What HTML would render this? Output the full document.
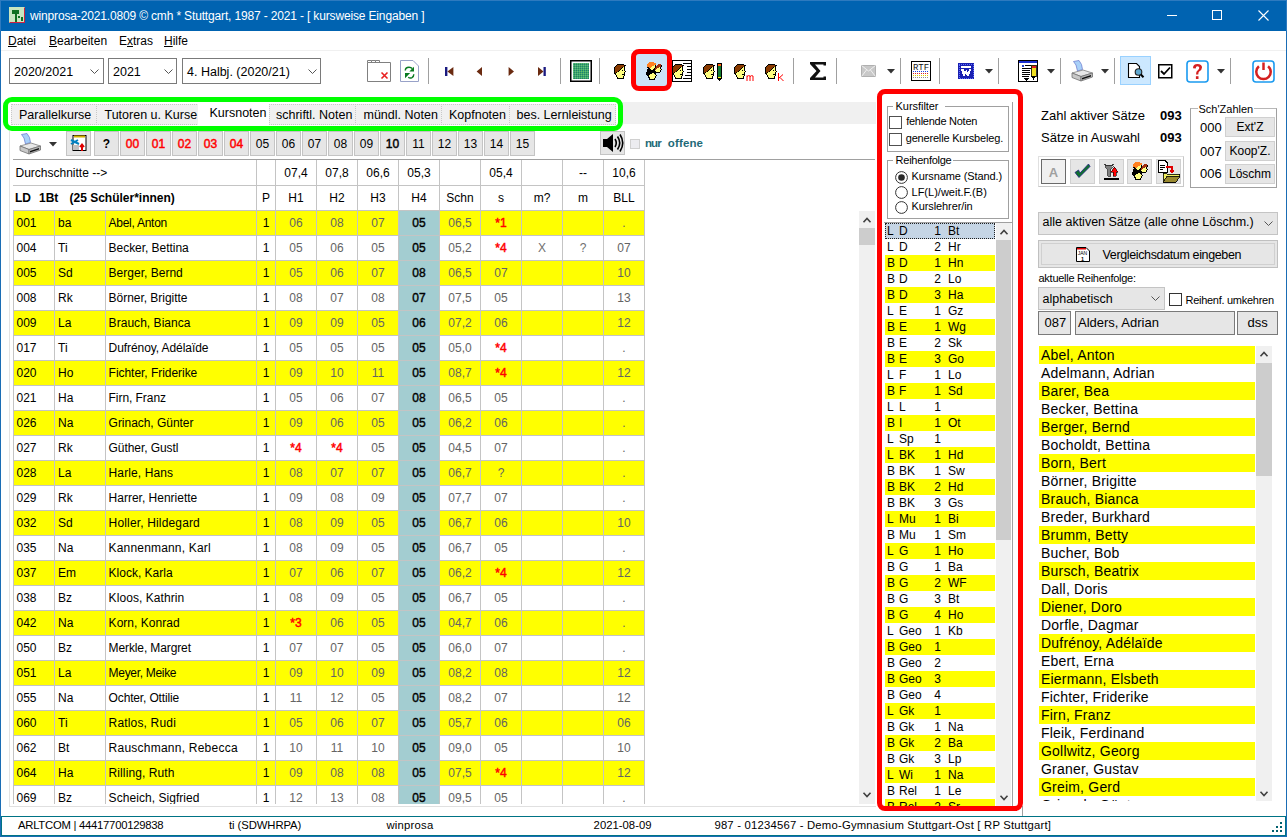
<!DOCTYPE html><html><head><meta charset="utf-8"><title>winprosa</title><style>
*{box-sizing:border-box;margin:0;padding:0}
html,body{width:1287px;height:837px;overflow:hidden;background:#fff;font-family:"Liberation Sans",sans-serif;color:#000}
.a{position:absolute}
.t{position:absolute;white-space:nowrap;line-height:1}
svg{position:absolute;overflow:visible}
</style></head><body>
<div class="a" style="left:0px;top:0px;width:1287px;height:31px;background:#0063b1"></div>
<div class="a" style="left:0px;top:0px;width:1287px;height:1px;background:#2d7abf"></div>
<div class="a" style="left:0px;top:0px;width:1px;height:31px;background:#2d7abf"></div>
<div class="a" style="left:1286px;top:0px;width:1px;height:31px;background:#2d7abf"></div>
<div class="a" style="left:9px;top:7px;width:16px;height:16px;background:#c8e6c0;border:1px solid #d02040;border-top-color:#c8e6c0;border-left-color:#c8e6c0"></div>
<svg style="left:9px;top:7px" width="16" height="16"><rect x="3" y="3" width="7" height="4" fill="#107020"/><rect x="6" y="6" width="2" height="9" fill="#107020"/><rect x="9" y="9" width="2" height="2" fill="#107020"/><rect x="12" y="10" width="2" height="4" fill="#107020"/></svg>
<div class="t" style="left:30px;top:9.84px;font-size:12px;color:#fff;letter-spacing:-0.154px">winprosa-2021.0809 © cmh * Stuttgart, 1987 - 2021 - [ kursweise Eingaben ]</div>
<div class="a" style="left:1167px;top:15px;width:10px;height:1px;background:#fff"></div>
<div class="a" style="left:1212px;top:10px;width:10px;height:10px;border:1px solid #fff"></div>
<svg style="left:1258px;top:10px" width="11" height="11"><path d="M0.5 0.5L10.5 10.5M10.5 0.5L0.5 10.5" stroke="#fff" stroke-width="1.1"/></svg>
<div class="a" style="left:0px;top:31px;width:1px;height:806px;background:#1a6db5"></div>
<div class="a" style="left:1286px;top:31px;width:1px;height:806px;background:#1a6db5"></div>
<div class="a" style="left:0px;top:836px;width:1287px;height:1px;background:#1a6db5"></div>
<div class="t" style="left:8px;top:34.84px;font-size:12px;"><u>D</u>atei</div>
<div class="t" style="left:49px;top:34.84px;font-size:12px;"><u>B</u>earbeiten</div>
<div class="t" style="left:119px;top:34.84px;font-size:12px;">E<u>x</u>tras</div>
<div class="t" style="left:164px;top:34.84px;font-size:12px;"><u>H</u>ilfe</div>
<div class="a" style="left:1px;top:50px;width:1285px;height:1px;background:#f0f0f0"></div>
<div class="a" style="left:9px;top:58px;width:95px;height:26px;border:1px solid #7a7a7a;background:#fff"></div>
<div class="t" style="left:14px;top:65.92px;font-size:12.5px;">2020/2021</div>
<svg style="left:90px;top:69px" width="9" height="5"><path d="M0.5 0.5L4.5 4.5L8.5 0.5" fill="none" stroke="#555" stroke-width="1"/></svg>
<div class="a" style="left:108px;top:58px;width:69px;height:26px;border:1px solid #7a7a7a;background:#fff"></div>
<div class="t" style="left:113px;top:65.92px;font-size:12.5px;">2021</div>
<svg style="left:164px;top:69px" width="9" height="5"><path d="M0.5 0.5L4.5 4.5L8.5 0.5" fill="none" stroke="#555" stroke-width="1"/></svg>
<div class="a" style="left:182px;top:58px;width:139px;height:26px;border:1px solid #7a7a7a;background:#fff"></div>
<div class="t" style="left:187px;top:65.92px;font-size:12.5px;">4. Halbj. (2020/21)</div>
<svg style="left:308px;top:69px" width="9" height="5"><path d="M0.5 0.5L4.5 4.5L8.5 0.5" fill="none" stroke="#555" stroke-width="1"/></svg>
<svg style="left:367px;top:59px" width="25" height="24"><path d="M0.5 3.5H23.5V22.5H0.5Z" fill="#fff" stroke="#808080"/><path d="M0.5 3.5V1.5H4.5V3.5M4.5 1.5H8.5V3.5M8.5 1.5H12.5V3.5" fill="none" stroke="#808080"/><path d="M14.5 13.5L20.5 19.5M20.5 13.5L14.5 19.5" stroke="#e82020" stroke-width="1.6"/></svg>
<svg style="left:400px;top:60px" width="20" height="23"><path d="M0.5 0.5H13L18.5 6V21.5H0.5Z" fill="#fff" stroke="#98a2c8"/><path d="M5.3 10.5Q5.3 7.2 9 7.2Q11 7.2 12.3 8.6" fill="none" stroke="#087a20" stroke-width="1.4"/><path d="M14 6.8V11.6H9.3Z" fill="#087a20"/><path d="M8.2 17.3Q10 18.6 12 17.6Q13.8 16.6 13.8 14.3" fill="none" stroke="#087a20" stroke-width="1.4"/><path d="M5 13H10.2L5 18.2Z" fill="#087a20"/></svg>
<div class="a" style="left:428px;top:58px;width:1px;height:26px;background:#a0a0a0"></div>
<svg style="left:445px;top:67px" width="110" height="10"><rect x="0" y="0" width="2.4" height="9" fill="#1a1a80"/><path d="M8.4 0V9L2.4 4.5Z" fill="#6a2a10"/><path d="M37 0V9L31.6 4.5Z" fill="#6a2a10"/><path d="M63.6 0V9L69 4.5Z" fill="#6a2a10"/><path d="M93 0V9L98.5 4.5Z" fill="#6a2a10"/><rect x="98.5" y="0" width="2.3" height="9" fill="#1a1a80"/></svg>
<div class="a" style="left:560px;top:58px;width:1px;height:26px;background:#a0a0a0"></div>
<svg style="left:570px;top:60px" width="22" height="22"><defs><pattern id="gm" width="2" height="2" patternUnits="userSpaceOnUse"><rect width="2" height="2" fill="#58b048"/><rect width="1" height="1" fill="#0a7a8a"/><rect x="1" y="1" width="1" height="1" fill="#40b8d8" opacity="0.6"/></pattern></defs><rect x="0.75" y="0.75" width="20.5" height="20.5" fill="#fff" stroke="#000" stroke-width="1.5"/><rect x="3" y="3" width="16" height="16" fill="url(#gm)"/></svg>
<div class="a" style="left:599px;top:58px;width:1px;height:26px;background:#a0a0a0"></div>
<svg style="left:614px;top:64px" width="12" height="15" shape-rendering="crispEdges"><rect x="3" y="0" width="7" height="1" fill="#000"/><rect x="2" y="1" width="1" height="1" fill="#000"/><rect x="3" y="1" width="7" height="1" fill="#8a3a00"/><rect x="10" y="1" width="2" height="1" fill="#000"/><rect x="1" y="2" width="1" height="1" fill="#000"/><rect x="2" y="2" width="8" height="1" fill="#8a3a00"/><rect x="10" y="2" width="1" height="1" fill="#000"/><rect x="0" y="3" width="1" height="1" fill="#000"/><rect x="1" y="3" width="7" height="1" fill="#8a3a00"/><rect x="8" y="3" width="1" height="1" fill="#000"/><rect x="9" y="3" width="1" height="1" fill="#ffff80"/><rect x="10" y="3" width="1" height="1" fill="#000"/><rect x="0" y="4" width="1" height="1" fill="#000"/><rect x="1" y="4" width="6" height="1" fill="#8a3a00"/><rect x="7" y="4" width="1" height="1" fill="#000"/><rect x="8" y="4" width="2" height="1" fill="#ffff80"/><rect x="10" y="4" width="1" height="1" fill="#000"/><rect x="0" y="5" width="1" height="1" fill="#000"/><rect x="1" y="5" width="5" height="1" fill="#8a3a00"/><rect x="6" y="5" width="1" height="1" fill="#000"/><rect x="7" y="5" width="3" height="1" fill="#ffff80"/><rect x="10" y="5" width="1" height="1" fill="#000"/><rect x="0" y="6" width="1" height="1" fill="#000"/><rect x="1" y="6" width="4" height="1" fill="#8a3a00"/><rect x="5" y="6" width="1" height="1" fill="#000"/><rect x="6" y="6" width="2" height="1" fill="#ffff80"/><rect x="8" y="6" width="1" height="1" fill="#000"/><rect x="9" y="6" width="1" height="1" fill="#ffff80"/><rect x="10" y="6" width="1" height="1" fill="#000"/><rect x="0" y="7" width="1" height="1" fill="#000"/><rect x="1" y="7" width="3" height="1" fill="#8a3a00"/><rect x="4" y="7" width="1" height="1" fill="#000"/><rect x="5" y="7" width="6" height="1" fill="#ffff80"/><rect x="11" y="7" width="1" height="1" fill="#000"/><rect x="0" y="8" width="1" height="1" fill="#000"/><rect x="1" y="8" width="1" height="1" fill="#8a3a00"/><rect x="2" y="8" width="1" height="1" fill="#000"/><rect x="3" y="8" width="7" height="1" fill="#ffff80"/><rect x="10" y="8" width="1" height="1" fill="#000"/><rect x="0" y="9" width="2" height="1" fill="#000"/><rect x="2" y="9" width="8" height="1" fill="#ffff80"/><rect x="10" y="9" width="1" height="1" fill="#000"/><rect x="1" y="10" width="1" height="1" fill="#000"/><rect x="2" y="10" width="6" height="1" fill="#ffff80"/><rect x="8" y="10" width="3" height="1" fill="#000"/><rect x="2" y="11" width="1" height="1" fill="#000"/><rect x="3" y="11" width="7" height="1" fill="#ffff80"/><rect x="10" y="11" width="1" height="1" fill="#000"/><rect x="2" y="12" width="1" height="1" fill="#000"/><rect x="3" y="12" width="6" height="1" fill="#ffff80"/><rect x="9" y="12" width="1" height="1" fill="#000"/><rect x="3" y="13" width="1" height="1" fill="#000"/><rect x="4" y="13" width="5" height="1" fill="#ffff80"/><rect x="9" y="13" width="1" height="1" fill="#000"/><rect x="3" y="14" width="7" height="1" fill="#000"/></svg>
<div class="a" style="left:631px;top:49px;width:41px;height:42px;border:5px solid #ff0000;border-radius:8px;background:#cce4f7"></div>
<svg style="left:646px;top:62px" width="16" height="18" shape-rendering="crispEdges"><rect x="3" y="0" width="5" height="1" fill="#ff8020"/><rect x="2" y="1" width="8" height="1" fill="#ff8020"/><rect x="1" y="2" width="9" height="1" fill="#ff8020"/><rect x="12" y="2" width="3" height="1" fill="#a03010"/><rect x="1" y="3" width="7" height="1" fill="#ff8020"/><rect x="8" y="3" width="1" height="1" fill="#ffff80"/><rect x="9" y="3" width="1" height="1" fill="#000"/><rect x="11" y="3" width="4" height="1" fill="#a03010"/><rect x="15" y="3" width="1" height="1" fill="#000"/><rect x="1" y="4" width="5" height="1" fill="#ff8020"/><rect x="6" y="4" width="3" height="1" fill="#ffff80"/><rect x="9" y="4" width="1" height="1" fill="#000"/><rect x="10" y="4" width="5" height="1" fill="#a03010"/><rect x="15" y="4" width="1" height="1" fill="#000"/><rect x="1" y="5" width="2" height="1" fill="#000"/><rect x="3" y="5" width="2" height="1" fill="#ff8020"/><rect x="5" y="5" width="4" height="1" fill="#ffff80"/><rect x="9" y="5" width="1" height="1" fill="#000"/><rect x="10" y="5" width="3" height="1" fill="#a03010"/><rect x="13" y="5" width="1" height="1" fill="#ffff80"/><rect x="14" y="5" width="1" height="1" fill="#000"/><rect x="2" y="6" width="2" height="1" fill="#000"/><rect x="4" y="6" width="4" height="1" fill="#ffff80"/><rect x="8" y="6" width="1" height="1" fill="#000"/><rect x="9" y="6" width="2" height="1" fill="#a03010"/><rect x="11" y="6" width="3" height="1" fill="#ffff80"/><rect x="14" y="6" width="1" height="1" fill="#000"/><rect x="1" y="7" width="4" height="1" fill="#000"/><rect x="5" y="7" width="2" height="1" fill="#ffff80"/><rect x="7" y="7" width="2" height="1" fill="#000"/><rect x="9" y="7" width="1" height="1" fill="#a03010"/><rect x="10" y="7" width="5" height="1" fill="#ffff80"/><rect x="15" y="7" width="1" height="1" fill="#000"/><rect x="1" y="8" width="8" height="1" fill="#000"/><rect x="9" y="8" width="5" height="1" fill="#ffff80"/><rect x="14" y="8" width="1" height="1" fill="#000"/><rect x="1" y="9" width="9" height="1" fill="#000"/><rect x="10" y="9" width="4" height="1" fill="#ffff80"/><rect x="14" y="9" width="1" height="1" fill="#000"/><rect x="0" y="10" width="14" height="1" fill="#000"/><rect x="0" y="11" width="6" height="1" fill="#000"/><rect x="6" y="11" width="2" height="1" fill="#ffff80"/><rect x="8" y="11" width="2" height="1" fill="#000"/><rect x="0" y="12" width="4" height="1" fill="#000"/><rect x="4" y="12" width="5" height="1" fill="#ffff80"/><rect x="9" y="12" width="1" height="1" fill="#000"/><rect x="1" y="13" width="2" height="1" fill="#000"/><rect x="3" y="13" width="7" height="1" fill="#ffff80"/><rect x="10" y="13" width="1" height="1" fill="#000"/><rect x="2" y="14" width="1" height="1" fill="#000"/><rect x="3" y="14" width="6" height="1" fill="#ffff80"/><rect x="9" y="14" width="1" height="1" fill="#000"/><rect x="2" y="15" width="2" height="1" fill="#000"/><rect x="4" y="15" width="5" height="1" fill="#ffff80"/><rect x="9" y="15" width="1" height="1" fill="#000"/><rect x="3" y="16" width="1" height="1" fill="#000"/><rect x="4" y="16" width="4" height="1" fill="#ffff80"/><rect x="8" y="16" width="1" height="1" fill="#000"/><rect x="3" y="17" width="6" height="1" fill="#000"/></svg>
<svg style="left:672px;top:60px" width="21" height="22" shape-rendering="crispEdges"><rect x="0.5" y="0.5" width="19" height="21" fill="#fff" stroke="#000"/><path d="M11 3.5H19M15 6.5H19M15 9.5H19M15 12.5H19M13 15.5H19M11 18.5H19" stroke="#000"/></svg>
<svg style="left:672px;top:64px" width="12" height="15" shape-rendering="crispEdges"><rect x="3" y="0" width="7" height="1" fill="#000"/><rect x="2" y="1" width="1" height="1" fill="#000"/><rect x="3" y="1" width="7" height="1" fill="#8a3a00"/><rect x="10" y="1" width="2" height="1" fill="#000"/><rect x="1" y="2" width="1" height="1" fill="#000"/><rect x="2" y="2" width="8" height="1" fill="#8a3a00"/><rect x="10" y="2" width="1" height="1" fill="#000"/><rect x="0" y="3" width="1" height="1" fill="#000"/><rect x="1" y="3" width="7" height="1" fill="#8a3a00"/><rect x="8" y="3" width="1" height="1" fill="#000"/><rect x="9" y="3" width="1" height="1" fill="#ffff80"/><rect x="10" y="3" width="1" height="1" fill="#000"/><rect x="0" y="4" width="1" height="1" fill="#000"/><rect x="1" y="4" width="6" height="1" fill="#8a3a00"/><rect x="7" y="4" width="1" height="1" fill="#000"/><rect x="8" y="4" width="2" height="1" fill="#ffff80"/><rect x="10" y="4" width="1" height="1" fill="#000"/><rect x="0" y="5" width="1" height="1" fill="#000"/><rect x="1" y="5" width="5" height="1" fill="#8a3a00"/><rect x="6" y="5" width="1" height="1" fill="#000"/><rect x="7" y="5" width="3" height="1" fill="#ffff80"/><rect x="10" y="5" width="1" height="1" fill="#000"/><rect x="0" y="6" width="1" height="1" fill="#000"/><rect x="1" y="6" width="4" height="1" fill="#8a3a00"/><rect x="5" y="6" width="1" height="1" fill="#000"/><rect x="6" y="6" width="2" height="1" fill="#ffff80"/><rect x="8" y="6" width="1" height="1" fill="#000"/><rect x="9" y="6" width="1" height="1" fill="#ffff80"/><rect x="10" y="6" width="1" height="1" fill="#000"/><rect x="0" y="7" width="1" height="1" fill="#000"/><rect x="1" y="7" width="3" height="1" fill="#8a3a00"/><rect x="4" y="7" width="1" height="1" fill="#000"/><rect x="5" y="7" width="6" height="1" fill="#ffff80"/><rect x="11" y="7" width="1" height="1" fill="#000"/><rect x="0" y="8" width="1" height="1" fill="#000"/><rect x="1" y="8" width="1" height="1" fill="#8a3a00"/><rect x="2" y="8" width="1" height="1" fill="#000"/><rect x="3" y="8" width="7" height="1" fill="#ffff80"/><rect x="10" y="8" width="1" height="1" fill="#000"/><rect x="0" y="9" width="2" height="1" fill="#000"/><rect x="2" y="9" width="8" height="1" fill="#ffff80"/><rect x="10" y="9" width="1" height="1" fill="#000"/><rect x="1" y="10" width="1" height="1" fill="#000"/><rect x="2" y="10" width="6" height="1" fill="#ffff80"/><rect x="8" y="10" width="3" height="1" fill="#000"/><rect x="2" y="11" width="1" height="1" fill="#000"/><rect x="3" y="11" width="7" height="1" fill="#ffff80"/><rect x="10" y="11" width="1" height="1" fill="#000"/><rect x="2" y="12" width="1" height="1" fill="#000"/><rect x="3" y="12" width="6" height="1" fill="#ffff80"/><rect x="9" y="12" width="1" height="1" fill="#000"/><rect x="3" y="13" width="1" height="1" fill="#000"/><rect x="4" y="13" width="5" height="1" fill="#ffff80"/><rect x="9" y="13" width="1" height="1" fill="#000"/><rect x="3" y="14" width="7" height="1" fill="#000"/></svg>
<svg style="left:703px;top:64px" width="12" height="15" shape-rendering="crispEdges"><rect x="3" y="0" width="7" height="1" fill="#000"/><rect x="2" y="1" width="1" height="1" fill="#000"/><rect x="3" y="1" width="7" height="1" fill="#8a3a00"/><rect x="10" y="1" width="2" height="1" fill="#000"/><rect x="1" y="2" width="1" height="1" fill="#000"/><rect x="2" y="2" width="8" height="1" fill="#8a3a00"/><rect x="10" y="2" width="1" height="1" fill="#000"/><rect x="0" y="3" width="1" height="1" fill="#000"/><rect x="1" y="3" width="7" height="1" fill="#8a3a00"/><rect x="8" y="3" width="1" height="1" fill="#000"/><rect x="9" y="3" width="1" height="1" fill="#ffff80"/><rect x="10" y="3" width="1" height="1" fill="#000"/><rect x="0" y="4" width="1" height="1" fill="#000"/><rect x="1" y="4" width="6" height="1" fill="#8a3a00"/><rect x="7" y="4" width="1" height="1" fill="#000"/><rect x="8" y="4" width="2" height="1" fill="#ffff80"/><rect x="10" y="4" width="1" height="1" fill="#000"/><rect x="0" y="5" width="1" height="1" fill="#000"/><rect x="1" y="5" width="5" height="1" fill="#8a3a00"/><rect x="6" y="5" width="1" height="1" fill="#000"/><rect x="7" y="5" width="3" height="1" fill="#ffff80"/><rect x="10" y="5" width="1" height="1" fill="#000"/><rect x="0" y="6" width="1" height="1" fill="#000"/><rect x="1" y="6" width="4" height="1" fill="#8a3a00"/><rect x="5" y="6" width="1" height="1" fill="#000"/><rect x="6" y="6" width="2" height="1" fill="#ffff80"/><rect x="8" y="6" width="1" height="1" fill="#000"/><rect x="9" y="6" width="1" height="1" fill="#ffff80"/><rect x="10" y="6" width="1" height="1" fill="#000"/><rect x="0" y="7" width="1" height="1" fill="#000"/><rect x="1" y="7" width="3" height="1" fill="#8a3a00"/><rect x="4" y="7" width="1" height="1" fill="#000"/><rect x="5" y="7" width="6" height="1" fill="#ffff80"/><rect x="11" y="7" width="1" height="1" fill="#000"/><rect x="0" y="8" width="1" height="1" fill="#000"/><rect x="1" y="8" width="1" height="1" fill="#8a3a00"/><rect x="2" y="8" width="1" height="1" fill="#000"/><rect x="3" y="8" width="7" height="1" fill="#ffff80"/><rect x="10" y="8" width="1" height="1" fill="#000"/><rect x="0" y="9" width="2" height="1" fill="#000"/><rect x="2" y="9" width="8" height="1" fill="#ffff80"/><rect x="10" y="9" width="1" height="1" fill="#000"/><rect x="1" y="10" width="1" height="1" fill="#000"/><rect x="2" y="10" width="6" height="1" fill="#ffff80"/><rect x="8" y="10" width="3" height="1" fill="#000"/><rect x="2" y="11" width="1" height="1" fill="#000"/><rect x="3" y="11" width="7" height="1" fill="#ffff80"/><rect x="10" y="11" width="1" height="1" fill="#000"/><rect x="2" y="12" width="1" height="1" fill="#000"/><rect x="3" y="12" width="6" height="1" fill="#ffff80"/><rect x="9" y="12" width="1" height="1" fill="#000"/><rect x="3" y="13" width="1" height="1" fill="#000"/><rect x="4" y="13" width="5" height="1" fill="#ffff80"/><rect x="9" y="13" width="1" height="1" fill="#000"/><rect x="3" y="14" width="7" height="1" fill="#000"/></svg>
<svg style="left:717px;top:63px" width="6" height="19" shape-rendering="crispEdges"><rect x="0" y="0" width="5" height="15" fill="#000"/><rect x="1" y="1" width="3" height="2" fill="#ff6010"/><rect x="1" y="3" width="3" height="11" fill="#107a30"/><rect x="1" y="14" width="3" height="1" fill="#ffff00"/><path d="M0 15H5L2.5 18Z" fill="#000"/></svg>
<svg style="left:734px;top:64px" width="12" height="15" shape-rendering="crispEdges"><rect x="3" y="0" width="7" height="1" fill="#000"/><rect x="2" y="1" width="1" height="1" fill="#000"/><rect x="3" y="1" width="7" height="1" fill="#8a3a00"/><rect x="10" y="1" width="2" height="1" fill="#000"/><rect x="1" y="2" width="1" height="1" fill="#000"/><rect x="2" y="2" width="8" height="1" fill="#8a3a00"/><rect x="10" y="2" width="1" height="1" fill="#000"/><rect x="0" y="3" width="1" height="1" fill="#000"/><rect x="1" y="3" width="7" height="1" fill="#8a3a00"/><rect x="8" y="3" width="1" height="1" fill="#000"/><rect x="9" y="3" width="1" height="1" fill="#ffff80"/><rect x="10" y="3" width="1" height="1" fill="#000"/><rect x="0" y="4" width="1" height="1" fill="#000"/><rect x="1" y="4" width="6" height="1" fill="#8a3a00"/><rect x="7" y="4" width="1" height="1" fill="#000"/><rect x="8" y="4" width="2" height="1" fill="#ffff80"/><rect x="10" y="4" width="1" height="1" fill="#000"/><rect x="0" y="5" width="1" height="1" fill="#000"/><rect x="1" y="5" width="5" height="1" fill="#8a3a00"/><rect x="6" y="5" width="1" height="1" fill="#000"/><rect x="7" y="5" width="3" height="1" fill="#ffff80"/><rect x="10" y="5" width="1" height="1" fill="#000"/><rect x="0" y="6" width="1" height="1" fill="#000"/><rect x="1" y="6" width="4" height="1" fill="#8a3a00"/><rect x="5" y="6" width="1" height="1" fill="#000"/><rect x="6" y="6" width="2" height="1" fill="#ffff80"/><rect x="8" y="6" width="1" height="1" fill="#000"/><rect x="9" y="6" width="1" height="1" fill="#ffff80"/><rect x="10" y="6" width="1" height="1" fill="#000"/><rect x="0" y="7" width="1" height="1" fill="#000"/><rect x="1" y="7" width="3" height="1" fill="#8a3a00"/><rect x="4" y="7" width="1" height="1" fill="#000"/><rect x="5" y="7" width="6" height="1" fill="#ffff80"/><rect x="11" y="7" width="1" height="1" fill="#000"/><rect x="0" y="8" width="1" height="1" fill="#000"/><rect x="1" y="8" width="1" height="1" fill="#8a3a00"/><rect x="2" y="8" width="1" height="1" fill="#000"/><rect x="3" y="8" width="7" height="1" fill="#ffff80"/><rect x="10" y="8" width="1" height="1" fill="#000"/><rect x="0" y="9" width="2" height="1" fill="#000"/><rect x="2" y="9" width="8" height="1" fill="#ffff80"/><rect x="10" y="9" width="1" height="1" fill="#000"/><rect x="1" y="10" width="1" height="1" fill="#000"/><rect x="2" y="10" width="6" height="1" fill="#ffff80"/><rect x="8" y="10" width="3" height="1" fill="#000"/><rect x="2" y="11" width="1" height="1" fill="#000"/><rect x="3" y="11" width="7" height="1" fill="#ffff80"/><rect x="10" y="11" width="1" height="1" fill="#000"/><rect x="2" y="12" width="1" height="1" fill="#000"/><rect x="3" y="12" width="6" height="1" fill="#ffff80"/><rect x="9" y="12" width="1" height="1" fill="#000"/><rect x="3" y="13" width="1" height="1" fill="#000"/><rect x="4" y="13" width="5" height="1" fill="#ffff80"/><rect x="9" y="13" width="1" height="1" fill="#000"/><rect x="3" y="14" width="7" height="1" fill="#000"/></svg>
<svg style="left:746px;top:74px" width="9" height="8"><path d="M1 7V1.5M1 2.5Q2.5 1 4 2V7M4 2.5Q5.5 1 7 2V7" fill="none" stroke="#ff0000" stroke-width="1"/></svg>
<svg style="left:765px;top:64px" width="12" height="15" shape-rendering="crispEdges"><rect x="3" y="0" width="7" height="1" fill="#000"/><rect x="2" y="1" width="1" height="1" fill="#000"/><rect x="3" y="1" width="7" height="1" fill="#8a3a00"/><rect x="10" y="1" width="2" height="1" fill="#000"/><rect x="1" y="2" width="1" height="1" fill="#000"/><rect x="2" y="2" width="8" height="1" fill="#8a3a00"/><rect x="10" y="2" width="1" height="1" fill="#000"/><rect x="0" y="3" width="1" height="1" fill="#000"/><rect x="1" y="3" width="7" height="1" fill="#8a3a00"/><rect x="8" y="3" width="1" height="1" fill="#000"/><rect x="9" y="3" width="1" height="1" fill="#ffff80"/><rect x="10" y="3" width="1" height="1" fill="#000"/><rect x="0" y="4" width="1" height="1" fill="#000"/><rect x="1" y="4" width="6" height="1" fill="#8a3a00"/><rect x="7" y="4" width="1" height="1" fill="#000"/><rect x="8" y="4" width="2" height="1" fill="#ffff80"/><rect x="10" y="4" width="1" height="1" fill="#000"/><rect x="0" y="5" width="1" height="1" fill="#000"/><rect x="1" y="5" width="5" height="1" fill="#8a3a00"/><rect x="6" y="5" width="1" height="1" fill="#000"/><rect x="7" y="5" width="3" height="1" fill="#ffff80"/><rect x="10" y="5" width="1" height="1" fill="#000"/><rect x="0" y="6" width="1" height="1" fill="#000"/><rect x="1" y="6" width="4" height="1" fill="#8a3a00"/><rect x="5" y="6" width="1" height="1" fill="#000"/><rect x="6" y="6" width="2" height="1" fill="#ffff80"/><rect x="8" y="6" width="1" height="1" fill="#000"/><rect x="9" y="6" width="1" height="1" fill="#ffff80"/><rect x="10" y="6" width="1" height="1" fill="#000"/><rect x="0" y="7" width="1" height="1" fill="#000"/><rect x="1" y="7" width="3" height="1" fill="#8a3a00"/><rect x="4" y="7" width="1" height="1" fill="#000"/><rect x="5" y="7" width="6" height="1" fill="#ffff80"/><rect x="11" y="7" width="1" height="1" fill="#000"/><rect x="0" y="8" width="1" height="1" fill="#000"/><rect x="1" y="8" width="1" height="1" fill="#8a3a00"/><rect x="2" y="8" width="1" height="1" fill="#000"/><rect x="3" y="8" width="7" height="1" fill="#ffff80"/><rect x="10" y="8" width="1" height="1" fill="#000"/><rect x="0" y="9" width="2" height="1" fill="#000"/><rect x="2" y="9" width="8" height="1" fill="#ffff80"/><rect x="10" y="9" width="1" height="1" fill="#000"/><rect x="1" y="10" width="1" height="1" fill="#000"/><rect x="2" y="10" width="6" height="1" fill="#ffff80"/><rect x="8" y="10" width="3" height="1" fill="#000"/><rect x="2" y="11" width="1" height="1" fill="#000"/><rect x="3" y="11" width="7" height="1" fill="#ffff80"/><rect x="10" y="11" width="1" height="1" fill="#000"/><rect x="2" y="12" width="1" height="1" fill="#000"/><rect x="3" y="12" width="6" height="1" fill="#ffff80"/><rect x="9" y="12" width="1" height="1" fill="#000"/><rect x="3" y="13" width="1" height="1" fill="#000"/><rect x="4" y="13" width="5" height="1" fill="#ffff80"/><rect x="9" y="13" width="1" height="1" fill="#000"/><rect x="3" y="14" width="7" height="1" fill="#000"/></svg>
<svg style="left:777px;top:73px" width="8" height="9"><path d="M1.5 0V8M1.5 5.5L6 1.5M3 4.5L6.5 8" fill="none" stroke="#ff0000" stroke-width="1"/></svg>
<div class="a" style="left:793px;top:58px;width:1px;height:26px;background:#a0a0a0"></div>
<svg style="left:809px;top:61px" width="19" height="20"><path d="M1 1H17V4.5H14.5V3.5H6L11.5 10L6 16.5H14.5V15.5H17V19H1V17L7.5 10L1 3Z" fill="#111"/></svg>
<div class="a" style="left:836px;top:58px;width:1px;height:26px;background:#a0a0a0"></div>
<svg style="left:861px;top:65px" width="15" height="12"><rect x="0.5" y="0.5" width="14" height="11" fill="#c8c8c8" stroke="#b0b0b0"/><path d="M0.5 0.5L7.5 6L14.5 0.5M0.5 11.5L5.5 5M14.5 11.5L9.5 5" stroke="#f0f0f0" fill="none"/></svg>
<svg style="left:887px;top:69px" width="8" height="5"><path d="M0 0H8L4 4.5Z" fill="#333"/></svg>
<div class="a" style="left:900px;top:58px;width:1px;height:26px;background:#a0a0a0"></div>
<svg style="left:911px;top:61px" width="21" height="21" shape-rendering="crispEdges"><rect x="0.5" y="0.5" width="19" height="19" fill="#fff" stroke="#000"/><text x="10" y="9" font-size="9" font-family="Liberation Mono" text-anchor="middle" fill="#111">RTF</text><path d="M2 10.5H18" stroke="#2040e0" stroke-dasharray="1 1"/><path d="M2 12.5H18" stroke="#e02020" stroke-dasharray="1 1"/><path d="M2 14.5H18" stroke="#e0d000" stroke-dasharray="1 1"/><path d="M2 16.5H18" stroke="#909090" stroke-dasharray="1 1"/></svg>
<div class="a" style="left:939px;top:58px;width:1px;height:26px;background:#a0a0a0"></div>
<svg style="left:958px;top:63px" width="17" height="17" shape-rendering="crispEdges"><rect x="0" y="0" width="16" height="16" fill="#1a20b0"/><rect x="1" y="1" width="14" height="14" fill="none" stroke="#6070ff" stroke-dasharray="1 1"/><rect x="3" y="3" width="10" height="2" fill="#fff"/><path d="M3 6H6L7 10L8 7H9L10 10L11 6H13L11 13H9L8 10L7 13H5Z" fill="#fff"/></svg>
<svg style="left:985px;top:69px" width="8" height="5"><path d="M0 0H8L4 4.5Z" fill="#333"/></svg>
<div class="a" style="left:998px;top:58px;width:1px;height:26px;background:#a0a0a0"></div>
<svg style="left:1018px;top:60px" width="21" height="23" shape-rendering="crispEdges"><rect x="0.5" y="0.5" width="19" height="21" fill="#fff" stroke="#000"/><rect x="1" y="1" width="18" height="2" fill="#1a30d0"/><rect x="4" y="5" width="2" height="2" fill="#2040c0"/><path d="M7 5.5H13M4 8.5H13M4 10.5H12M4 12.5H12M4 14.5H12M4 16.5H11" stroke="#000"/><rect x="13" y="5" width="5" height="11" fill="#f0e020" stroke="#000" stroke-width="0.8"/><rect x="13.5" y="5.5" width="4" height="2" fill="#e02020"/><path d="M13 16L15.5 20L18 16Z" fill="#000"/><path d="M5 18H11L8 21Z" fill="#000"/></svg>
<svg style="left:1047px;top:69px" width="8" height="5"><path d="M0 0H8L4 4.5Z" fill="#333"/></svg>
<div class="a" style="left:1060px;top:58px;width:1px;height:26px;background:#a0a0a0"></div>
<svg style="left:1071px;top:60px" width="23" height="22"><path d="M2.5 1.5L8 0.5L10.5 4.5L11.5 9.5L6.5 11L5 5Z" fill="#a8d0f8" stroke="#7080d0" stroke-width="0.8"/><path d="M1 13L12 10L21.5 13L10 16.5Z" fill="#e8e8e8" stroke="#808080" stroke-width="0.8"/><path d="M1 13L10 16.5V21L1 17.5Z" fill="#c8c8c8" stroke="#707070" stroke-width="0.8"/><path d="M10 16.5L21.5 13V17L10 21Z" fill="#b8b8b8" stroke="#707070" stroke-width="0.8"/><path d="M11 18L20 15V16.5L11 19.5Z" fill="#111"/></svg>
<svg style="left:1101px;top:69px" width="8" height="5"><path d="M0 0H8L4 4.5Z" fill="#333"/></svg>
<div class="a" style="left:1114px;top:58px;width:1px;height:26px;background:#a0a0a0"></div>
<div class="a" style="left:1120px;top:56px;width:31px;height:29px;background:#cce8ff;border:1px solid #99d1ff"></div>
<svg style="left:1128px;top:63px" width="18" height="17"><path d="M0.5 0.5H8.5L11.5 3.5V14.5H0.5Z" fill="#fff" stroke="#000" stroke-width="1.1"/><circle cx="10.5" cy="9" r="3.3" fill="#60a8d0" stroke="#222" stroke-width="1.1"/><path d="M12.8 11.5L15.5 14.3" stroke="#000" stroke-width="2"/></svg>
<svg style="left:1158px;top:64px" width="15" height="15"><rect x="0.75" y="0.75" width="13" height="13" fill="#fff" stroke="#000" stroke-width="1.5"/><path d="M3 7L6 10L12 3.5" fill="none" stroke="#000" stroke-width="1.8"/></svg>
<svg style="left:1186px;top:60px" width="23" height="23"><rect x="1" y="1" width="21" height="21" rx="3" fill="#fff" stroke="#1a9af0" stroke-width="1.6"/><path d="M7 8.2Q7 4 11.5 4Q16 4 16 7.6Q16 10 13.2 11.4Q12.3 12 12.3 14.6H10Q10 11.2 11.8 10.2Q13.3 9.2 13.3 7.8Q13.3 6.3 11.5 6.3Q9.7 6.3 9.7 8.6Z" fill="#d42020"/><rect x="9.9" y="16.2" width="2.6" height="2.8" fill="#d42020"/></svg>
<svg style="left:1217px;top:69px" width="8" height="5"><path d="M0 0H8L4 4.5Z" fill="#333"/></svg>
<div class="a" style="left:1230px;top:58px;width:1px;height:26px;background:#a0a0a0"></div>
<svg style="left:1252px;top:60px" width="23" height="23"><rect x="1" y="1" width="21" height="21" rx="3" fill="#fff" stroke="#1a9af0" stroke-width="1.6"/><path d="M6.9 6.3A7.2 7.2 0 1 0 16.1 6.3" fill="none" stroke="#d42020" stroke-width="2.5"/><path d="M11.5 2.5V10" stroke="#d42020" stroke-width="2.5"/></svg>
<div class="a" style="left:623px;top:102px;width:253px;height:22px;background:#f0f0f0"></div>
<div class="a" style="left:3px;top:97px;width:620px;height:34px;border:5px solid #00ff00;border-radius:9px;background:#fff"></div>
<div class="a" style="left:11px;top:104px;width:86px;height:21px;background:#f0f0f0;border:1px dotted #c8c8c8"></div>
<div class="t" style="left:19px;top:108.92px;font-size:12.5px;">Parallelkurse</div>
<div class="a" style="left:96px;top:104px;width:103px;height:21px;background:#f0f0f0;border:1px dotted #c8c8c8"></div>
<div class="t" style="left:104.5px;top:108.92px;font-size:12.5px;">Tutoren u. Kurse</div>
<div class="a" style="left:198px;top:102px;width:71px;height:23px;background:#fff"></div>
<div class="t" style="left:209.5px;top:107.42px;font-size:12.5px;">Kursnoten</div>
<div class="a" style="left:269px;top:104px;width:87px;height:21px;background:#f0f0f0;border:1px dotted #c8c8c8"></div>
<div class="t" style="left:276px;top:108.92px;font-size:12.5px;">schriftl. Noten</div>
<div class="a" style="left:355px;top:104px;width:87px;height:21px;background:#f0f0f0;border:1px dotted #c8c8c8"></div>
<div class="t" style="left:363.5px;top:108.92px;font-size:12.5px;">mündl. Noten</div>
<div class="a" style="left:441px;top:104px;width:69px;height:21px;background:#f0f0f0;border:1px dotted #c8c8c8"></div>
<div class="t" style="left:449px;top:108.92px;font-size:12.5px;">Kopfnoten</div>
<div class="a" style="left:509px;top:104px;width:107px;height:21px;background:#f0f0f0;border:1px dotted #c8c8c8"></div>
<div class="t" style="left:516.5px;top:108.92px;font-size:12.5px;">bes. Lernleistung</div>
<svg style="left:19px;top:133px" width="23" height="22"><path d="M2.5 1.5L8 0.5L10.5 4.5L11.5 9.5L6.5 11L5 5Z" fill="#a8d0f8" stroke="#7080d0" stroke-width="0.8"/><path d="M1 13L12 10L21.5 13L10 16.5Z" fill="#e8e8e8" stroke="#808080" stroke-width="0.8"/><path d="M1 13L10 16.5V21L1 17.5Z" fill="#c8c8c8" stroke="#707070" stroke-width="0.8"/><path d="M10 16.5L21.5 13V17L10 21Z" fill="#b8b8b8" stroke="#707070" stroke-width="0.8"/><path d="M11 18L20 15V16.5L11 19.5Z" fill="#111"/></svg>
<svg style="left:49px;top:142px" width="8" height="5"><path d="M0 0H8L4 4.5Z" fill="#333"/></svg>
<div class="a" style="left:66px;top:131px;width:25px;height:25px;background:#e6e6e6;border:1px solid #c4c4c4"></div>
<svg style="left:71px;top:135px" width="16" height="17"><rect x="2" y="0.5" width="13" height="15" fill="#fff" stroke="#000"/><rect x="3" y="0.5" width="11" height="2" fill="#d0b000"/><path d="M0 5L8 9M0 9L7 5" stroke="#0080c0" stroke-width="2"/><rect x="2" y="10" width="6" height="5" fill="#c0c0c0"/><path d="M11 16V10M9 12L11 9.5L13 12" stroke="#e00000" stroke-width="2" fill="none"/></svg>
<div class="a" style="left:94px;top:131px;width:25px;height:25px;background:#e6e6e6;border:1px solid #c4c4c4"></div>
<div class="t" style="left:94.0px;width:25px;text-align:center;top:137.84px;font-size:12px;font-weight:bold">?</div>
<div class="a" style="left:120px;top:131px;width:25px;height:25px;background:#e6e6e6;border:1px solid #c4c4c4"></div>
<div class="t" style="left:120.0px;width:25px;text-align:center;top:137.84px;font-size:12px;color:#ff0000;-webkit-text-stroke:0.45px #ff0000">00</div>
<div class="a" style="left:146px;top:131px;width:25px;height:25px;background:#e6e6e6;border:1px solid #c4c4c4"></div>
<div class="t" style="left:146.0px;width:25px;text-align:center;top:137.84px;font-size:12px;color:#ff0000;-webkit-text-stroke:0.45px #ff0000">01</div>
<div class="a" style="left:172px;top:131px;width:25px;height:25px;background:#e6e6e6;border:1px solid #c4c4c4"></div>
<div class="t" style="left:172.0px;width:25px;text-align:center;top:137.84px;font-size:12px;color:#ff0000;-webkit-text-stroke:0.45px #ff0000">02</div>
<div class="a" style="left:198px;top:131px;width:25px;height:25px;background:#e6e6e6;border:1px solid #c4c4c4"></div>
<div class="t" style="left:198.0px;width:25px;text-align:center;top:137.84px;font-size:12px;color:#ff0000;-webkit-text-stroke:0.45px #ff0000">03</div>
<div class="a" style="left:224px;top:131px;width:25px;height:25px;background:#e6e6e6;border:1px solid #c4c4c4"></div>
<div class="t" style="left:224.0px;width:25px;text-align:center;top:137.84px;font-size:12px;color:#ff0000;-webkit-text-stroke:0.45px #ff0000">04</div>
<div class="a" style="left:250px;top:131px;width:25px;height:25px;background:#e6e6e6;border:1px solid #c4c4c4"></div>
<div class="t" style="left:250.0px;width:25px;text-align:center;top:137.84px;font-size:12px;">05</div>
<div class="a" style="left:276px;top:131px;width:25px;height:25px;background:#e6e6e6;border:1px solid #c4c4c4"></div>
<div class="t" style="left:276.0px;width:25px;text-align:center;top:137.84px;font-size:12px;">06</div>
<div class="a" style="left:302px;top:131px;width:25px;height:25px;background:#e6e6e6;border:1px solid #c4c4c4"></div>
<div class="t" style="left:302.0px;width:25px;text-align:center;top:137.84px;font-size:12px;">07</div>
<div class="a" style="left:328px;top:131px;width:25px;height:25px;background:#e6e6e6;border:1px solid #c4c4c4"></div>
<div class="t" style="left:328.0px;width:25px;text-align:center;top:137.84px;font-size:12px;">08</div>
<div class="a" style="left:354px;top:131px;width:25px;height:25px;background:#e6e6e6;border:1px solid #c4c4c4"></div>
<div class="t" style="left:354.0px;width:25px;text-align:center;top:137.84px;font-size:12px;">09</div>
<div class="a" style="left:380px;top:131px;width:25px;height:25px;background:#e6e6e6;border:1px solid #c4c4c4"></div>
<div class="t" style="left:380.0px;width:25px;text-align:center;top:137.84px;font-size:12px;-webkit-text-stroke:0.45px #000">10</div>
<div class="a" style="left:406px;top:131px;width:25px;height:25px;background:#e6e6e6;border:1px solid #c4c4c4"></div>
<div class="t" style="left:406.0px;width:25px;text-align:center;top:137.84px;font-size:12px;">11</div>
<div class="a" style="left:432px;top:131px;width:25px;height:25px;background:#e6e6e6;border:1px solid #c4c4c4"></div>
<div class="t" style="left:432.0px;width:25px;text-align:center;top:137.84px;font-size:12px;">12</div>
<div class="a" style="left:458px;top:131px;width:25px;height:25px;background:#e6e6e6;border:1px solid #c4c4c4"></div>
<div class="t" style="left:458.0px;width:25px;text-align:center;top:137.84px;font-size:12px;">13</div>
<div class="a" style="left:484px;top:131px;width:25px;height:25px;background:#e6e6e6;border:1px solid #c4c4c4"></div>
<div class="t" style="left:484.0px;width:25px;text-align:center;top:137.84px;font-size:12px;">14</div>
<div class="a" style="left:510px;top:131px;width:25px;height:25px;background:#e6e6e6;border:1px solid #c4c4c4"></div>
<div class="t" style="left:510.0px;width:25px;text-align:center;top:137.84px;font-size:12px;">15</div>
<div class="a" style="left:600px;top:131px;width:25px;height:24px;background:#e6e6e6;border:1px solid #c4c4c4"></div>
<svg style="left:601px;top:133px" width="24" height="20"><path d="M2 6H6L12 1V19L6 14H2Z" fill="#000"/><path d="M14 6Q16.5 10 14 14M16.5 3.5Q21 10 16.5 16.5M19 1.5Q24.5 10 19 18.5" fill="none" stroke="#000" stroke-width="1.6"/></svg>
<div class="a" style="left:630px;top:139px;width:10px;height:10px;border:1px solid #d0d0d0;background:#ececf0"></div>
<div class="t" style="left:645px;top:138.27px;font-size:11.5px;font-weight:bold;color:#1f6a78;letter-spacing:-0.912px">nur</div>
<div class="t" style="left:667.8px;top:138.27px;font-size:11.5px;font-weight:bold;color:#1f6a78;letter-spacing:0.140px">offene</div>
<div class="a" style="left:9px;top:131px;width:1px;height:676px;background:#e3e3e3"></div>
<div class="a" style="left:9px;top:806px;width:867px;height:1px;background:#e0e0e0"></div>
<div class="a" style="left:0;top:0;width:1287px;height:804px;overflow:hidden;clip-path:inset(0 0 0 0)">
<div class="a" style="left:14px;top:211px;width:630px;height:24px;background:#ffff00"></div>
<div class="a" style="left:399px;top:211px;width:40px;height:24px;background:#a3cdd1"></div>
<div class="a" style="left:14px;top:236px;width:630px;height:24px;background:#fff"></div>
<div class="a" style="left:399px;top:236px;width:40px;height:24px;background:#a3cdd1"></div>
<div class="a" style="left:14px;top:261px;width:630px;height:24px;background:#ffff00"></div>
<div class="a" style="left:399px;top:261px;width:40px;height:24px;background:#a3cdd1"></div>
<div class="a" style="left:14px;top:286px;width:630px;height:24px;background:#fff"></div>
<div class="a" style="left:399px;top:286px;width:40px;height:24px;background:#a3cdd1"></div>
<div class="a" style="left:14px;top:311px;width:630px;height:24px;background:#ffff00"></div>
<div class="a" style="left:399px;top:311px;width:40px;height:24px;background:#a3cdd1"></div>
<div class="a" style="left:14px;top:336px;width:630px;height:24px;background:#fff"></div>
<div class="a" style="left:399px;top:336px;width:40px;height:24px;background:#a3cdd1"></div>
<div class="a" style="left:14px;top:361px;width:630px;height:24px;background:#ffff00"></div>
<div class="a" style="left:399px;top:361px;width:40px;height:24px;background:#a3cdd1"></div>
<div class="a" style="left:14px;top:386px;width:630px;height:24px;background:#fff"></div>
<div class="a" style="left:399px;top:386px;width:40px;height:24px;background:#a3cdd1"></div>
<div class="a" style="left:14px;top:411px;width:630px;height:24px;background:#ffff00"></div>
<div class="a" style="left:399px;top:411px;width:40px;height:24px;background:#a3cdd1"></div>
<div class="a" style="left:14px;top:436px;width:630px;height:24px;background:#fff"></div>
<div class="a" style="left:399px;top:436px;width:40px;height:24px;background:#a3cdd1"></div>
<div class="a" style="left:14px;top:461px;width:630px;height:24px;background:#ffff00"></div>
<div class="a" style="left:399px;top:461px;width:40px;height:24px;background:#a3cdd1"></div>
<div class="a" style="left:14px;top:486px;width:630px;height:24px;background:#fff"></div>
<div class="a" style="left:399px;top:486px;width:40px;height:24px;background:#a3cdd1"></div>
<div class="a" style="left:14px;top:511px;width:630px;height:24px;background:#ffff00"></div>
<div class="a" style="left:399px;top:511px;width:40px;height:24px;background:#a3cdd1"></div>
<div class="a" style="left:14px;top:536px;width:630px;height:24px;background:#fff"></div>
<div class="a" style="left:399px;top:536px;width:40px;height:24px;background:#a3cdd1"></div>
<div class="a" style="left:14px;top:561px;width:630px;height:24px;background:#ffff00"></div>
<div class="a" style="left:399px;top:561px;width:40px;height:24px;background:#a3cdd1"></div>
<div class="a" style="left:14px;top:586px;width:630px;height:24px;background:#fff"></div>
<div class="a" style="left:399px;top:586px;width:40px;height:24px;background:#a3cdd1"></div>
<div class="a" style="left:14px;top:611px;width:630px;height:24px;background:#ffff00"></div>
<div class="a" style="left:399px;top:611px;width:40px;height:24px;background:#a3cdd1"></div>
<div class="a" style="left:14px;top:636px;width:630px;height:24px;background:#fff"></div>
<div class="a" style="left:399px;top:636px;width:40px;height:24px;background:#a3cdd1"></div>
<div class="a" style="left:14px;top:661px;width:630px;height:24px;background:#ffff00"></div>
<div class="a" style="left:399px;top:661px;width:40px;height:24px;background:#a3cdd1"></div>
<div class="a" style="left:14px;top:686px;width:630px;height:24px;background:#fff"></div>
<div class="a" style="left:399px;top:686px;width:40px;height:24px;background:#a3cdd1"></div>
<div class="a" style="left:14px;top:711px;width:630px;height:24px;background:#ffff00"></div>
<div class="a" style="left:399px;top:711px;width:40px;height:24px;background:#a3cdd1"></div>
<div class="a" style="left:14px;top:736px;width:630px;height:24px;background:#fff"></div>
<div class="a" style="left:399px;top:736px;width:40px;height:24px;background:#a3cdd1"></div>
<div class="a" style="left:14px;top:761px;width:630px;height:24px;background:#ffff00"></div>
<div class="a" style="left:399px;top:761px;width:40px;height:24px;background:#a3cdd1"></div>
<div class="a" style="left:14px;top:786px;width:630px;height:24px;background:#fff"></div>
<div class="a" style="left:399px;top:786px;width:40px;height:24px;background:#a3cdd1"></div>
<div class="a" style="left:13px;top:159px;width:862px;height:1px;background:#a0a0a0"></div>
<div class="a" style="left:13px;top:185px;width:631px;height:1px;background:#c4c4c4"></div>
<div class="a" style="left:13px;top:210px;width:631px;height:1px;background:#c4c4c4"></div>
<div class="a" style="left:13px;top:235px;width:631px;height:1px;background:#c4c4c4"></div>
<div class="a" style="left:13px;top:260px;width:631px;height:1px;background:#c4c4c4"></div>
<div class="a" style="left:13px;top:285px;width:631px;height:1px;background:#c4c4c4"></div>
<div class="a" style="left:13px;top:310px;width:631px;height:1px;background:#c4c4c4"></div>
<div class="a" style="left:13px;top:335px;width:631px;height:1px;background:#c4c4c4"></div>
<div class="a" style="left:13px;top:360px;width:631px;height:1px;background:#c4c4c4"></div>
<div class="a" style="left:13px;top:385px;width:631px;height:1px;background:#c4c4c4"></div>
<div class="a" style="left:13px;top:410px;width:631px;height:1px;background:#c4c4c4"></div>
<div class="a" style="left:13px;top:435px;width:631px;height:1px;background:#c4c4c4"></div>
<div class="a" style="left:13px;top:460px;width:631px;height:1px;background:#c4c4c4"></div>
<div class="a" style="left:13px;top:485px;width:631px;height:1px;background:#c4c4c4"></div>
<div class="a" style="left:13px;top:510px;width:631px;height:1px;background:#c4c4c4"></div>
<div class="a" style="left:13px;top:535px;width:631px;height:1px;background:#c4c4c4"></div>
<div class="a" style="left:13px;top:560px;width:631px;height:1px;background:#c4c4c4"></div>
<div class="a" style="left:13px;top:585px;width:631px;height:1px;background:#c4c4c4"></div>
<div class="a" style="left:13px;top:610px;width:631px;height:1px;background:#c4c4c4"></div>
<div class="a" style="left:13px;top:635px;width:631px;height:1px;background:#c4c4c4"></div>
<div class="a" style="left:13px;top:660px;width:631px;height:1px;background:#c4c4c4"></div>
<div class="a" style="left:13px;top:685px;width:631px;height:1px;background:#c4c4c4"></div>
<div class="a" style="left:13px;top:710px;width:631px;height:1px;background:#c4c4c4"></div>
<div class="a" style="left:13px;top:735px;width:631px;height:1px;background:#c4c4c4"></div>
<div class="a" style="left:13px;top:760px;width:631px;height:1px;background:#c4c4c4"></div>
<div class="a" style="left:13px;top:785px;width:631px;height:1px;background:#c4c4c4"></div>
<div class="a" style="left:13px;top:810px;width:631px;height:1px;background:#c4c4c4"></div>
<div class="a" style="left:13px;top:210px;width:1px;height:620px;background:#c4c4c4"></div>
<div class="a" style="left:54px;top:210px;width:1px;height:620px;background:#c4c4c4"></div>
<div class="a" style="left:105px;top:210px;width:1px;height:620px;background:#c4c4c4"></div>
<div class="a" style="left:256px;top:160px;width:1px;height:670px;background:#c4c4c4"></div>
<div class="a" style="left:275px;top:160px;width:1px;height:670px;background:#c4c4c4"></div>
<div class="a" style="left:316px;top:160px;width:1px;height:670px;background:#c4c4c4"></div>
<div class="a" style="left:357px;top:160px;width:1px;height:670px;background:#c4c4c4"></div>
<div class="a" style="left:398px;top:160px;width:1px;height:670px;background:#c4c4c4"></div>
<div class="a" style="left:439px;top:160px;width:1px;height:670px;background:#c4c4c4"></div>
<div class="a" style="left:480px;top:160px;width:1px;height:670px;background:#c4c4c4"></div>
<div class="a" style="left:521px;top:160px;width:1px;height:670px;background:#c4c4c4"></div>
<div class="a" style="left:562px;top:160px;width:1px;height:670px;background:#c4c4c4"></div>
<div class="a" style="left:603px;top:160px;width:1px;height:670px;background:#c4c4c4"></div>
<div class="a" style="left:644px;top:160px;width:1px;height:670px;background:#c4c4c4"></div>
<div class="t" style="left:15.5px;top:166.84px;font-size:12px;">Durchschnitte --&gt;</div>
<div class="t" style="left:15px;top:191.84px;font-size:12px;font-weight:bold">LD</div>
<div class="t" style="left:39px;top:191.84px;font-size:12px;font-weight:bold">1Bt</div>
<div class="t" style="left:69.5px;top:191.84px;font-size:12px;font-weight:bold;letter-spacing:-0.004px">(25 Schüler*innen)</div>
<div class="t" style="left:246.0px;width:40px;text-align:center;top:191.84px;font-size:12px;">P</div>
<div class="t" style="left:276.0px;width:40px;text-align:center;top:166.84px;font-size:12px;">07,4</div>
<div class="t" style="left:276.0px;width:40px;text-align:center;top:191.84px;font-size:12px;">H1</div>
<div class="t" style="left:317.0px;width:40px;text-align:center;top:166.84px;font-size:12px;">07,8</div>
<div class="t" style="left:317.0px;width:40px;text-align:center;top:191.84px;font-size:12px;">H2</div>
<div class="t" style="left:358.0px;width:40px;text-align:center;top:166.84px;font-size:12px;">06,6</div>
<div class="t" style="left:358.0px;width:40px;text-align:center;top:191.84px;font-size:12px;">H3</div>
<div class="t" style="left:399.0px;width:40px;text-align:center;top:166.84px;font-size:12px;">05,3</div>
<div class="t" style="left:399.0px;width:40px;text-align:center;top:191.84px;font-size:12px;">H4</div>
<div class="t" style="left:440.0px;width:40px;text-align:center;top:191.84px;font-size:12px;">Schn</div>
<div class="t" style="left:481.0px;width:40px;text-align:center;top:166.84px;font-size:12px;">05,4</div>
<div class="t" style="left:481.0px;width:40px;text-align:center;top:191.84px;font-size:12px;">s</div>
<div class="t" style="left:522.0px;width:40px;text-align:center;top:191.84px;font-size:12px;">m?</div>
<div class="t" style="left:563.0px;width:40px;text-align:center;top:166.84px;font-size:12px;">--</div>
<div class="t" style="left:563.0px;width:40px;text-align:center;top:191.84px;font-size:12px;">m</div>
<div class="t" style="left:604.0px;width:40px;text-align:center;top:166.84px;font-size:12px;">10,6</div>
<div class="t" style="left:604.0px;width:40px;text-align:center;top:191.84px;font-size:12px;">BLL</div>
<div class="t" style="left:16.5px;top:216.84px;font-size:12px;">001</div>
<div class="t" style="left:58px;top:216.84px;font-size:12px;">ba</div>
<div class="t" style="left:108.6px;top:216.84px;font-size:12px;;letter-spacing:-0.278px">Abel, Anton</div>
<div class="t" style="left:257.0px;width:18px;text-align:center;top:216.84px;font-size:12px;">1</div>
<div class="t" style="left:276.0px;width:40px;text-align:center;top:216.84px;font-size:12px;color:#646464">06</div>
<div class="t" style="left:317.0px;width:40px;text-align:center;top:216.84px;font-size:12px;color:#646464">08</div>
<div class="t" style="left:358.0px;width:40px;text-align:center;top:216.84px;font-size:12px;color:#646464">07</div>
<div class="t" style="left:399.0px;width:40px;text-align:center;top:216.84px;font-size:12px;-webkit-text-stroke:0.4px #000">05</div>
<div class="t" style="left:440.0px;width:40px;text-align:center;top:216.84px;font-size:12px;color:#646464">06,5</div>
<div class="t" style="left:481.0px;width:40px;text-align:center;top:216.84px;font-size:12px;color:#ff0000;-webkit-text-stroke:0.45px #ff0000">*1</div>
<div class="t" style="left:604.0px;width:40px;text-align:center;top:216.84px;font-size:12px;color:#646464">.</div>
<div class="t" style="left:16.5px;top:241.84px;font-size:12px;">004</div>
<div class="t" style="left:58px;top:241.84px;font-size:12px;">Ti</div>
<div class="t" style="left:108.6px;top:241.84px;font-size:12px;;letter-spacing:-0.044px">Becker, Bettina</div>
<div class="t" style="left:257.0px;width:18px;text-align:center;top:241.84px;font-size:12px;">1</div>
<div class="t" style="left:276.0px;width:40px;text-align:center;top:241.84px;font-size:12px;color:#646464">05</div>
<div class="t" style="left:317.0px;width:40px;text-align:center;top:241.84px;font-size:12px;color:#646464">06</div>
<div class="t" style="left:358.0px;width:40px;text-align:center;top:241.84px;font-size:12px;color:#646464">05</div>
<div class="t" style="left:399.0px;width:40px;text-align:center;top:241.84px;font-size:12px;-webkit-text-stroke:0.4px #000">05</div>
<div class="t" style="left:440.0px;width:40px;text-align:center;top:241.84px;font-size:12px;color:#646464">05,2</div>
<div class="t" style="left:481.0px;width:40px;text-align:center;top:241.84px;font-size:12px;color:#ff0000;-webkit-text-stroke:0.45px #ff0000">*4</div>
<div class="t" style="left:522.0px;width:40px;text-align:center;top:241.84px;font-size:12px;color:#707070">X</div>
<div class="t" style="left:563.0px;width:40px;text-align:center;top:241.84px;font-size:12px;color:#707070">?</div>
<div class="t" style="left:604.0px;width:40px;text-align:center;top:241.84px;font-size:12px;color:#646464">07</div>
<div class="t" style="left:16.5px;top:266.84px;font-size:12px;">005</div>
<div class="t" style="left:58px;top:266.84px;font-size:12px;">Sd</div>
<div class="t" style="left:108.6px;top:266.84px;font-size:12px;;letter-spacing:0.013px">Berger, Bernd</div>
<div class="t" style="left:257.0px;width:18px;text-align:center;top:266.84px;font-size:12px;">1</div>
<div class="t" style="left:276.0px;width:40px;text-align:center;top:266.84px;font-size:12px;color:#646464">05</div>
<div class="t" style="left:317.0px;width:40px;text-align:center;top:266.84px;font-size:12px;color:#646464">06</div>
<div class="t" style="left:358.0px;width:40px;text-align:center;top:266.84px;font-size:12px;color:#646464">07</div>
<div class="t" style="left:399.0px;width:40px;text-align:center;top:266.84px;font-size:12px;-webkit-text-stroke:0.4px #000">08</div>
<div class="t" style="left:440.0px;width:40px;text-align:center;top:266.84px;font-size:12px;color:#646464">06,5</div>
<div class="t" style="left:481.0px;width:40px;text-align:center;top:266.84px;font-size:12px;color:#646464">07</div>
<div class="t" style="left:604.0px;width:40px;text-align:center;top:266.84px;font-size:12px;color:#646464">10</div>
<div class="t" style="left:16.5px;top:291.84px;font-size:12px;">008</div>
<div class="t" style="left:58px;top:291.84px;font-size:12px;">Rk</div>
<div class="t" style="left:108.6px;top:291.84px;font-size:12px;;letter-spacing:-0.032px">Börner, Brigitte</div>
<div class="t" style="left:257.0px;width:18px;text-align:center;top:291.84px;font-size:12px;">1</div>
<div class="t" style="left:276.0px;width:40px;text-align:center;top:291.84px;font-size:12px;color:#646464">08</div>
<div class="t" style="left:317.0px;width:40px;text-align:center;top:291.84px;font-size:12px;color:#646464">07</div>
<div class="t" style="left:358.0px;width:40px;text-align:center;top:291.84px;font-size:12px;color:#646464">08</div>
<div class="t" style="left:399.0px;width:40px;text-align:center;top:291.84px;font-size:12px;-webkit-text-stroke:0.4px #000">07</div>
<div class="t" style="left:440.0px;width:40px;text-align:center;top:291.84px;font-size:12px;color:#646464">07,5</div>
<div class="t" style="left:481.0px;width:40px;text-align:center;top:291.84px;font-size:12px;color:#646464">05</div>
<div class="t" style="left:604.0px;width:40px;text-align:center;top:291.84px;font-size:12px;color:#646464">13</div>
<div class="t" style="left:16.5px;top:316.84px;font-size:12px;">009</div>
<div class="t" style="left:58px;top:316.84px;font-size:12px;">La</div>
<div class="t" style="left:108.6px;top:316.84px;font-size:12px;;letter-spacing:0.040px">Brauch, Bianca</div>
<div class="t" style="left:257.0px;width:18px;text-align:center;top:316.84px;font-size:12px;">1</div>
<div class="t" style="left:276.0px;width:40px;text-align:center;top:316.84px;font-size:12px;color:#646464">09</div>
<div class="t" style="left:317.0px;width:40px;text-align:center;top:316.84px;font-size:12px;color:#646464">09</div>
<div class="t" style="left:358.0px;width:40px;text-align:center;top:316.84px;font-size:12px;color:#646464">05</div>
<div class="t" style="left:399.0px;width:40px;text-align:center;top:316.84px;font-size:12px;-webkit-text-stroke:0.4px #000">06</div>
<div class="t" style="left:440.0px;width:40px;text-align:center;top:316.84px;font-size:12px;color:#646464">07,2</div>
<div class="t" style="left:481.0px;width:40px;text-align:center;top:316.84px;font-size:12px;color:#646464">06</div>
<div class="t" style="left:604.0px;width:40px;text-align:center;top:316.84px;font-size:12px;color:#646464">12</div>
<div class="t" style="left:16.5px;top:341.84px;font-size:12px;">017</div>
<div class="t" style="left:58px;top:341.84px;font-size:12px;">Ti</div>
<div class="t" style="left:108.6px;top:341.84px;font-size:12px;;letter-spacing:-0.081px">Dufrénoy, Adélaïde</div>
<div class="t" style="left:257.0px;width:18px;text-align:center;top:341.84px;font-size:12px;">1</div>
<div class="t" style="left:276.0px;width:40px;text-align:center;top:341.84px;font-size:12px;color:#646464">05</div>
<div class="t" style="left:317.0px;width:40px;text-align:center;top:341.84px;font-size:12px;color:#646464">05</div>
<div class="t" style="left:358.0px;width:40px;text-align:center;top:341.84px;font-size:12px;color:#646464">05</div>
<div class="t" style="left:399.0px;width:40px;text-align:center;top:341.84px;font-size:12px;-webkit-text-stroke:0.4px #000">05</div>
<div class="t" style="left:440.0px;width:40px;text-align:center;top:341.84px;font-size:12px;color:#646464">05,0</div>
<div class="t" style="left:481.0px;width:40px;text-align:center;top:341.84px;font-size:12px;color:#ff0000;-webkit-text-stroke:0.45px #ff0000">*4</div>
<div class="t" style="left:604.0px;width:40px;text-align:center;top:341.84px;font-size:12px;color:#646464">.</div>
<div class="t" style="left:16.5px;top:366.84px;font-size:12px;">020</div>
<div class="t" style="left:58px;top:366.84px;font-size:12px;">Ho</div>
<div class="t" style="left:108.6px;top:366.84px;font-size:12px;;letter-spacing:-0.039px">Fichter, Friderike</div>
<div class="t" style="left:257.0px;width:18px;text-align:center;top:366.84px;font-size:12px;">1</div>
<div class="t" style="left:276.0px;width:40px;text-align:center;top:366.84px;font-size:12px;color:#646464">09</div>
<div class="t" style="left:317.0px;width:40px;text-align:center;top:366.84px;font-size:12px;color:#646464">10</div>
<div class="t" style="left:358.0px;width:40px;text-align:center;top:366.84px;font-size:12px;color:#646464">11</div>
<div class="t" style="left:399.0px;width:40px;text-align:center;top:366.84px;font-size:12px;-webkit-text-stroke:0.4px #000">05</div>
<div class="t" style="left:440.0px;width:40px;text-align:center;top:366.84px;font-size:12px;color:#646464">08,7</div>
<div class="t" style="left:481.0px;width:40px;text-align:center;top:366.84px;font-size:12px;color:#ff0000;-webkit-text-stroke:0.45px #ff0000">*4</div>
<div class="t" style="left:604.0px;width:40px;text-align:center;top:366.84px;font-size:12px;color:#646464">12</div>
<div class="t" style="left:16.5px;top:391.84px;font-size:12px;">021</div>
<div class="t" style="left:58px;top:391.84px;font-size:12px;">Ha</div>
<div class="t" style="left:108.6px;top:391.84px;font-size:12px;;letter-spacing:-0.061px">Firn, Franz</div>
<div class="t" style="left:257.0px;width:18px;text-align:center;top:391.84px;font-size:12px;">1</div>
<div class="t" style="left:276.0px;width:40px;text-align:center;top:391.84px;font-size:12px;color:#646464">05</div>
<div class="t" style="left:317.0px;width:40px;text-align:center;top:391.84px;font-size:12px;color:#646464">06</div>
<div class="t" style="left:358.0px;width:40px;text-align:center;top:391.84px;font-size:12px;color:#646464">07</div>
<div class="t" style="left:399.0px;width:40px;text-align:center;top:391.84px;font-size:12px;-webkit-text-stroke:0.4px #000">08</div>
<div class="t" style="left:440.0px;width:40px;text-align:center;top:391.84px;font-size:12px;color:#646464">06,5</div>
<div class="t" style="left:481.0px;width:40px;text-align:center;top:391.84px;font-size:12px;color:#646464">05</div>
<div class="t" style="left:604.0px;width:40px;text-align:center;top:391.84px;font-size:12px;color:#646464">.</div>
<div class="t" style="left:16.5px;top:416.84px;font-size:12px;">026</div>
<div class="t" style="left:58px;top:416.84px;font-size:12px;">Na</div>
<div class="t" style="left:108.6px;top:416.84px;font-size:12px;;letter-spacing:-0.034px">Grinach, Günter</div>
<div class="t" style="left:257.0px;width:18px;text-align:center;top:416.84px;font-size:12px;">1</div>
<div class="t" style="left:276.0px;width:40px;text-align:center;top:416.84px;font-size:12px;color:#646464">09</div>
<div class="t" style="left:317.0px;width:40px;text-align:center;top:416.84px;font-size:12px;color:#646464">06</div>
<div class="t" style="left:358.0px;width:40px;text-align:center;top:416.84px;font-size:12px;color:#646464">05</div>
<div class="t" style="left:399.0px;width:40px;text-align:center;top:416.84px;font-size:12px;-webkit-text-stroke:0.4px #000">05</div>
<div class="t" style="left:440.0px;width:40px;text-align:center;top:416.84px;font-size:12px;color:#646464">06,2</div>
<div class="t" style="left:481.0px;width:40px;text-align:center;top:416.84px;font-size:12px;color:#646464">06</div>
<div class="t" style="left:604.0px;width:40px;text-align:center;top:416.84px;font-size:12px;color:#646464">.</div>
<div class="t" style="left:16.5px;top:441.84px;font-size:12px;">027</div>
<div class="t" style="left:58px;top:441.84px;font-size:12px;">Rk</div>
<div class="t" style="left:108.6px;top:441.84px;font-size:12px;;letter-spacing:-0.067px">Güther, Gustl</div>
<div class="t" style="left:257.0px;width:18px;text-align:center;top:441.84px;font-size:12px;">1</div>
<div class="t" style="left:276.0px;width:40px;text-align:center;top:441.84px;font-size:12px;color:#ff0000;-webkit-text-stroke:0.45px #ff0000">*4</div>
<div class="t" style="left:317.0px;width:40px;text-align:center;top:441.84px;font-size:12px;color:#ff0000;-webkit-text-stroke:0.45px #ff0000">*4</div>
<div class="t" style="left:358.0px;width:40px;text-align:center;top:441.84px;font-size:12px;color:#646464">05</div>
<div class="t" style="left:399.0px;width:40px;text-align:center;top:441.84px;font-size:12px;-webkit-text-stroke:0.4px #000">05</div>
<div class="t" style="left:440.0px;width:40px;text-align:center;top:441.84px;font-size:12px;color:#646464">04,5</div>
<div class="t" style="left:481.0px;width:40px;text-align:center;top:441.84px;font-size:12px;color:#646464">07</div>
<div class="t" style="left:604.0px;width:40px;text-align:center;top:441.84px;font-size:12px;color:#646464">.</div>
<div class="t" style="left:16.5px;top:466.84px;font-size:12px;">028</div>
<div class="t" style="left:58px;top:466.84px;font-size:12px;">La</div>
<div class="t" style="left:108.6px;top:466.84px;font-size:12px;;letter-spacing:0.114px">Harle, Hans</div>
<div class="t" style="left:257.0px;width:18px;text-align:center;top:466.84px;font-size:12px;">1</div>
<div class="t" style="left:276.0px;width:40px;text-align:center;top:466.84px;font-size:12px;color:#646464">08</div>
<div class="t" style="left:317.0px;width:40px;text-align:center;top:466.84px;font-size:12px;color:#646464">07</div>
<div class="t" style="left:358.0px;width:40px;text-align:center;top:466.84px;font-size:12px;color:#646464">07</div>
<div class="t" style="left:399.0px;width:40px;text-align:center;top:466.84px;font-size:12px;-webkit-text-stroke:0.4px #000">05</div>
<div class="t" style="left:440.0px;width:40px;text-align:center;top:466.84px;font-size:12px;color:#646464">06,7</div>
<div class="t" style="left:481.0px;width:40px;text-align:center;top:466.84px;font-size:12px;color:#646464">?</div>
<div class="t" style="left:604.0px;width:40px;text-align:center;top:466.84px;font-size:12px;color:#646464">.</div>
<div class="t" style="left:16.5px;top:491.84px;font-size:12px;">029</div>
<div class="t" style="left:58px;top:491.84px;font-size:12px;">Rk</div>
<div class="t" style="left:108.6px;top:491.84px;font-size:12px;;letter-spacing:-0.000px">Harrer, Henriette</div>
<div class="t" style="left:257.0px;width:18px;text-align:center;top:491.84px;font-size:12px;">1</div>
<div class="t" style="left:276.0px;width:40px;text-align:center;top:491.84px;font-size:12px;color:#646464">09</div>
<div class="t" style="left:317.0px;width:40px;text-align:center;top:491.84px;font-size:12px;color:#646464">08</div>
<div class="t" style="left:358.0px;width:40px;text-align:center;top:491.84px;font-size:12px;color:#646464">09</div>
<div class="t" style="left:399.0px;width:40px;text-align:center;top:491.84px;font-size:12px;-webkit-text-stroke:0.4px #000">05</div>
<div class="t" style="left:440.0px;width:40px;text-align:center;top:491.84px;font-size:12px;color:#646464">07,7</div>
<div class="t" style="left:481.0px;width:40px;text-align:center;top:491.84px;font-size:12px;color:#646464">07</div>
<div class="t" style="left:604.0px;width:40px;text-align:center;top:491.84px;font-size:12px;color:#646464">.</div>
<div class="t" style="left:16.5px;top:516.84px;font-size:12px;">032</div>
<div class="t" style="left:58px;top:516.84px;font-size:12px;">Sd</div>
<div class="t" style="left:108.6px;top:516.84px;font-size:12px;;letter-spacing:0.155px">Holler, Hildegard</div>
<div class="t" style="left:257.0px;width:18px;text-align:center;top:516.84px;font-size:12px;">1</div>
<div class="t" style="left:276.0px;width:40px;text-align:center;top:516.84px;font-size:12px;color:#646464">08</div>
<div class="t" style="left:317.0px;width:40px;text-align:center;top:516.84px;font-size:12px;color:#646464">09</div>
<div class="t" style="left:358.0px;width:40px;text-align:center;top:516.84px;font-size:12px;color:#646464">05</div>
<div class="t" style="left:399.0px;width:40px;text-align:center;top:516.84px;font-size:12px;-webkit-text-stroke:0.4px #000">05</div>
<div class="t" style="left:440.0px;width:40px;text-align:center;top:516.84px;font-size:12px;color:#646464">06,7</div>
<div class="t" style="left:481.0px;width:40px;text-align:center;top:516.84px;font-size:12px;color:#646464">06</div>
<div class="t" style="left:604.0px;width:40px;text-align:center;top:516.84px;font-size:12px;color:#646464">10</div>
<div class="t" style="left:16.5px;top:541.84px;font-size:12px;">035</div>
<div class="t" style="left:58px;top:541.84px;font-size:12px;">Na</div>
<div class="t" style="left:108.6px;top:541.84px;font-size:12px;;letter-spacing:0.173px">Kannenmann, Karl</div>
<div class="t" style="left:257.0px;width:18px;text-align:center;top:541.84px;font-size:12px;">1</div>
<div class="t" style="left:276.0px;width:40px;text-align:center;top:541.84px;font-size:12px;color:#646464">08</div>
<div class="t" style="left:317.0px;width:40px;text-align:center;top:541.84px;font-size:12px;color:#646464">09</div>
<div class="t" style="left:358.0px;width:40px;text-align:center;top:541.84px;font-size:12px;color:#646464">05</div>
<div class="t" style="left:399.0px;width:40px;text-align:center;top:541.84px;font-size:12px;-webkit-text-stroke:0.4px #000">05</div>
<div class="t" style="left:440.0px;width:40px;text-align:center;top:541.84px;font-size:12px;color:#646464">06,7</div>
<div class="t" style="left:481.0px;width:40px;text-align:center;top:541.84px;font-size:12px;color:#646464">05</div>
<div class="t" style="left:604.0px;width:40px;text-align:center;top:541.84px;font-size:12px;color:#646464">.</div>
<div class="t" style="left:16.5px;top:566.84px;font-size:12px;">037</div>
<div class="t" style="left:58px;top:566.84px;font-size:12px;">Em</div>
<div class="t" style="left:108.6px;top:566.84px;font-size:12px;;letter-spacing:-0.003px">Klock, Karla</div>
<div class="t" style="left:257.0px;width:18px;text-align:center;top:566.84px;font-size:12px;">1</div>
<div class="t" style="left:276.0px;width:40px;text-align:center;top:566.84px;font-size:12px;color:#646464">07</div>
<div class="t" style="left:317.0px;width:40px;text-align:center;top:566.84px;font-size:12px;color:#646464">06</div>
<div class="t" style="left:358.0px;width:40px;text-align:center;top:566.84px;font-size:12px;color:#646464">07</div>
<div class="t" style="left:399.0px;width:40px;text-align:center;top:566.84px;font-size:12px;-webkit-text-stroke:0.4px #000">05</div>
<div class="t" style="left:440.0px;width:40px;text-align:center;top:566.84px;font-size:12px;color:#646464">06,2</div>
<div class="t" style="left:481.0px;width:40px;text-align:center;top:566.84px;font-size:12px;color:#ff0000;-webkit-text-stroke:0.45px #ff0000">*4</div>
<div class="t" style="left:604.0px;width:40px;text-align:center;top:566.84px;font-size:12px;color:#646464">12</div>
<div class="t" style="left:16.5px;top:591.84px;font-size:12px;">038</div>
<div class="t" style="left:58px;top:591.84px;font-size:12px;">Bz</div>
<div class="t" style="left:108.6px;top:591.84px;font-size:12px;;letter-spacing:0.069px">Kloos, Kathrin</div>
<div class="t" style="left:257.0px;width:18px;text-align:center;top:591.84px;font-size:12px;">1</div>
<div class="t" style="left:276.0px;width:40px;text-align:center;top:591.84px;font-size:12px;color:#646464">08</div>
<div class="t" style="left:317.0px;width:40px;text-align:center;top:591.84px;font-size:12px;color:#646464">09</div>
<div class="t" style="left:358.0px;width:40px;text-align:center;top:591.84px;font-size:12px;color:#646464">05</div>
<div class="t" style="left:399.0px;width:40px;text-align:center;top:591.84px;font-size:12px;-webkit-text-stroke:0.4px #000">05</div>
<div class="t" style="left:440.0px;width:40px;text-align:center;top:591.84px;font-size:12px;color:#646464">06,7</div>
<div class="t" style="left:481.0px;width:40px;text-align:center;top:591.84px;font-size:12px;color:#646464">05</div>
<div class="t" style="left:604.0px;width:40px;text-align:center;top:591.84px;font-size:12px;color:#646464">.</div>
<div class="t" style="left:16.5px;top:616.84px;font-size:12px;">042</div>
<div class="t" style="left:58px;top:616.84px;font-size:12px;">Na</div>
<div class="t" style="left:108.6px;top:616.84px;font-size:12px;;letter-spacing:0.035px">Korn, Konrad</div>
<div class="t" style="left:257.0px;width:18px;text-align:center;top:616.84px;font-size:12px;">1</div>
<div class="t" style="left:276.0px;width:40px;text-align:center;top:616.84px;font-size:12px;color:#ff0000;-webkit-text-stroke:0.45px #ff0000">*3</div>
<div class="t" style="left:317.0px;width:40px;text-align:center;top:616.84px;font-size:12px;color:#646464">06</div>
<div class="t" style="left:358.0px;width:40px;text-align:center;top:616.84px;font-size:12px;color:#646464">05</div>
<div class="t" style="left:399.0px;width:40px;text-align:center;top:616.84px;font-size:12px;-webkit-text-stroke:0.4px #000">05</div>
<div class="t" style="left:440.0px;width:40px;text-align:center;top:616.84px;font-size:12px;color:#646464">04,7</div>
<div class="t" style="left:481.0px;width:40px;text-align:center;top:616.84px;font-size:12px;color:#646464">06</div>
<div class="t" style="left:604.0px;width:40px;text-align:center;top:616.84px;font-size:12px;color:#646464">.</div>
<div class="t" style="left:16.5px;top:641.84px;font-size:12px;">050</div>
<div class="t" style="left:58px;top:641.84px;font-size:12px;">Bz</div>
<div class="t" style="left:108.6px;top:641.84px;font-size:12px;;letter-spacing:-0.116px">Merkle, Margret</div>
<div class="t" style="left:257.0px;width:18px;text-align:center;top:641.84px;font-size:12px;">1</div>
<div class="t" style="left:276.0px;width:40px;text-align:center;top:641.84px;font-size:12px;color:#646464">07</div>
<div class="t" style="left:317.0px;width:40px;text-align:center;top:641.84px;font-size:12px;color:#646464">07</div>
<div class="t" style="left:358.0px;width:40px;text-align:center;top:641.84px;font-size:12px;color:#646464">05</div>
<div class="t" style="left:399.0px;width:40px;text-align:center;top:641.84px;font-size:12px;-webkit-text-stroke:0.4px #000">05</div>
<div class="t" style="left:440.0px;width:40px;text-align:center;top:641.84px;font-size:12px;color:#646464">06,0</div>
<div class="t" style="left:481.0px;width:40px;text-align:center;top:641.84px;font-size:12px;color:#646464">07</div>
<div class="t" style="left:604.0px;width:40px;text-align:center;top:641.84px;font-size:12px;color:#646464">.</div>
<div class="t" style="left:16.5px;top:666.84px;font-size:12px;">051</div>
<div class="t" style="left:58px;top:666.84px;font-size:12px;">La</div>
<div class="t" style="left:108.6px;top:666.84px;font-size:12px;;letter-spacing:-0.314px">Meyer, Meike</div>
<div class="t" style="left:257.0px;width:18px;text-align:center;top:666.84px;font-size:12px;">1</div>
<div class="t" style="left:276.0px;width:40px;text-align:center;top:666.84px;font-size:12px;color:#646464">09</div>
<div class="t" style="left:317.0px;width:40px;text-align:center;top:666.84px;font-size:12px;color:#646464">10</div>
<div class="t" style="left:358.0px;width:40px;text-align:center;top:666.84px;font-size:12px;color:#646464">09</div>
<div class="t" style="left:399.0px;width:40px;text-align:center;top:666.84px;font-size:12px;-webkit-text-stroke:0.4px #000">05</div>
<div class="t" style="left:440.0px;width:40px;text-align:center;top:666.84px;font-size:12px;color:#646464">08,2</div>
<div class="t" style="left:481.0px;width:40px;text-align:center;top:666.84px;font-size:12px;color:#646464">08</div>
<div class="t" style="left:604.0px;width:40px;text-align:center;top:666.84px;font-size:12px;color:#646464">12</div>
<div class="t" style="left:16.5px;top:691.84px;font-size:12px;">055</div>
<div class="t" style="left:58px;top:691.84px;font-size:12px;">Na</div>
<div class="t" style="left:108.6px;top:691.84px;font-size:12px;;letter-spacing:-0.149px">Ochter, Ottilie</div>
<div class="t" style="left:257.0px;width:18px;text-align:center;top:691.84px;font-size:12px;">1</div>
<div class="t" style="left:276.0px;width:40px;text-align:center;top:691.84px;font-size:12px;color:#646464">11</div>
<div class="t" style="left:317.0px;width:40px;text-align:center;top:691.84px;font-size:12px;color:#646464">12</div>
<div class="t" style="left:358.0px;width:40px;text-align:center;top:691.84px;font-size:12px;color:#646464">05</div>
<div class="t" style="left:399.0px;width:40px;text-align:center;top:691.84px;font-size:12px;-webkit-text-stroke:0.4px #000">05</div>
<div class="t" style="left:440.0px;width:40px;text-align:center;top:691.84px;font-size:12px;color:#646464">08,2</div>
<div class="t" style="left:481.0px;width:40px;text-align:center;top:691.84px;font-size:12px;color:#646464">07</div>
<div class="t" style="left:604.0px;width:40px;text-align:center;top:691.84px;font-size:12px;color:#646464">12</div>
<div class="t" style="left:16.5px;top:716.84px;font-size:12px;">060</div>
<div class="t" style="left:58px;top:716.84px;font-size:12px;">Ti</div>
<div class="t" style="left:108.6px;top:716.84px;font-size:12px;;letter-spacing:0.167px">Ratlos, Rudi</div>
<div class="t" style="left:257.0px;width:18px;text-align:center;top:716.84px;font-size:12px;">1</div>
<div class="t" style="left:276.0px;width:40px;text-align:center;top:716.84px;font-size:12px;color:#646464">05</div>
<div class="t" style="left:317.0px;width:40px;text-align:center;top:716.84px;font-size:12px;color:#646464">06</div>
<div class="t" style="left:358.0px;width:40px;text-align:center;top:716.84px;font-size:12px;color:#646464">07</div>
<div class="t" style="left:399.0px;width:40px;text-align:center;top:716.84px;font-size:12px;-webkit-text-stroke:0.4px #000">05</div>
<div class="t" style="left:440.0px;width:40px;text-align:center;top:716.84px;font-size:12px;color:#646464">05,7</div>
<div class="t" style="left:481.0px;width:40px;text-align:center;top:716.84px;font-size:12px;color:#646464">06</div>
<div class="t" style="left:604.0px;width:40px;text-align:center;top:716.84px;font-size:12px;color:#646464">06</div>
<div class="t" style="left:16.5px;top:741.84px;font-size:12px;">062</div>
<div class="t" style="left:58px;top:741.84px;font-size:12px;">Bt</div>
<div class="t" style="left:108.6px;top:741.84px;font-size:12px;;letter-spacing:0.237px">Rauschmann, Rebecca</div>
<div class="t" style="left:257.0px;width:18px;text-align:center;top:741.84px;font-size:12px;">1</div>
<div class="t" style="left:276.0px;width:40px;text-align:center;top:741.84px;font-size:12px;color:#646464">10</div>
<div class="t" style="left:317.0px;width:40px;text-align:center;top:741.84px;font-size:12px;color:#646464">11</div>
<div class="t" style="left:358.0px;width:40px;text-align:center;top:741.84px;font-size:12px;color:#646464">10</div>
<div class="t" style="left:399.0px;width:40px;text-align:center;top:741.84px;font-size:12px;-webkit-text-stroke:0.4px #000">05</div>
<div class="t" style="left:440.0px;width:40px;text-align:center;top:741.84px;font-size:12px;color:#646464">09,0</div>
<div class="t" style="left:481.0px;width:40px;text-align:center;top:741.84px;font-size:12px;color:#646464">05</div>
<div class="t" style="left:604.0px;width:40px;text-align:center;top:741.84px;font-size:12px;color:#646464">10</div>
<div class="t" style="left:16.5px;top:766.84px;font-size:12px;">064</div>
<div class="t" style="left:58px;top:766.84px;font-size:12px;">Ha</div>
<div class="t" style="left:108.6px;top:766.84px;font-size:12px;;letter-spacing:0.092px">Rilling, Ruth</div>
<div class="t" style="left:257.0px;width:18px;text-align:center;top:766.84px;font-size:12px;">1</div>
<div class="t" style="left:276.0px;width:40px;text-align:center;top:766.84px;font-size:12px;color:#646464">09</div>
<div class="t" style="left:317.0px;width:40px;text-align:center;top:766.84px;font-size:12px;color:#646464">08</div>
<div class="t" style="left:358.0px;width:40px;text-align:center;top:766.84px;font-size:12px;color:#646464">08</div>
<div class="t" style="left:399.0px;width:40px;text-align:center;top:766.84px;font-size:12px;-webkit-text-stroke:0.4px #000">05</div>
<div class="t" style="left:440.0px;width:40px;text-align:center;top:766.84px;font-size:12px;color:#646464">07,5</div>
<div class="t" style="left:481.0px;width:40px;text-align:center;top:766.84px;font-size:12px;color:#ff0000;-webkit-text-stroke:0.45px #ff0000">*4</div>
<div class="t" style="left:604.0px;width:40px;text-align:center;top:766.84px;font-size:12px;color:#646464">12</div>
<div class="t" style="left:16.5px;top:791.84px;font-size:12px;">069</div>
<div class="t" style="left:58px;top:791.84px;font-size:12px;">Bz</div>
<div class="t" style="left:108.6px;top:791.84px;font-size:12px;;letter-spacing:0.053px">Scheich, Sigfried</div>
<div class="t" style="left:257.0px;width:18px;text-align:center;top:791.84px;font-size:12px;">1</div>
<div class="t" style="left:276.0px;width:40px;text-align:center;top:791.84px;font-size:12px;color:#646464">12</div>
<div class="t" style="left:317.0px;width:40px;text-align:center;top:791.84px;font-size:12px;color:#646464">13</div>
<div class="t" style="left:358.0px;width:40px;text-align:center;top:791.84px;font-size:12px;color:#646464">08</div>
<div class="t" style="left:399.0px;width:40px;text-align:center;top:791.84px;font-size:12px;-webkit-text-stroke:0.4px #000">05</div>
<div class="t" style="left:440.0px;width:40px;text-align:center;top:791.84px;font-size:12px;color:#646464">09,5</div>
<div class="t" style="left:481.0px;width:40px;text-align:center;top:791.84px;font-size:12px;color:#646464">05</div>
<div class="t" style="left:604.0px;width:40px;text-align:center;top:791.84px;font-size:12px;color:#646464">.</div>
</div>
<div class="a" style="left:859px;top:211px;width:16px;height:593px;background:#f0f0f0"></div>
<div class="a" style="left:859px;top:228px;width:16px;height:17px;background:#cdcdcd"></div>
<svg style="left:862px;top:217px" width="10" height="6"><path d="M1.5 5.2L5 1.5L8.5 5.2" fill="none" stroke="#404040" stroke-width="1.6"/></svg>
<svg style="left:862px;top:792px" width="10" height="6"><path d="M1.5 0.8L5 4.5L8.5 0.8" fill="none" stroke="#404040" stroke-width="1.6"/></svg>
<div class="a" style="left:882px;top:94px;width:136px;height:717px;background:#fff"></div>
<div class="a" style="left:1012px;top:102px;width:1px;height:704px;background:#a0a0a0"></div>
<div class="a" style="left:887px;top:106px;width:122px;height:46px;border:1px solid #a0a0a0"></div>
<div class="a" style="left:893px;top:100px;width:52px;height:10px;background:#fff"></div>
<div class="t" style="left:895.6px;top:101.29px;font-size:11px;;letter-spacing:-0.056px">Kursfilter</div>
<div class="a" style="left:889px;top:116px;width:13px;height:13px;border:1px solid #505050"></div>
<div class="t" style="left:906.2px;top:116.19px;font-size:11px;;letter-spacing:-0.263px">fehlende Noten</div>
<div class="a" style="left:889px;top:133px;width:13px;height:13px;border:1px solid #505050"></div>
<div class="t" style="left:905.7px;top:133.09px;font-size:11px;;letter-spacing:-0.179px">generelle Kursbeleg.</div>
<div class="a" style="left:887px;top:160px;width:122px;height:59px;border:1px solid #a0a0a0"></div>
<div class="a" style="left:893px;top:154px;width:60px;height:10px;background:#fff"></div>
<div class="t" style="left:895.6px;top:155.29px;font-size:11px;;letter-spacing:-0.261px">Reihenfolge</div>
<svg style="left:895px;top:170.9px" width="13" height="13"><circle cx="6.5" cy="6.5" r="5.9" fill="#fff" stroke="#333" stroke-width="1"/><circle cx="6.5" cy="6.5" r="3.3" fill="#2a2a2a"/></svg>
<div class="t" style="left:911.5px;top:171.49px;font-size:11px;;letter-spacing:-0.101px">Kursname (Stand.)</div>
<svg style="left:895px;top:185.9px" width="13" height="13"><circle cx="6.5" cy="6.5" r="5.9" fill="#fff" stroke="#333" stroke-width="1"/></svg>
<div class="t" style="left:911.5px;top:186.59px;font-size:11px;;letter-spacing:0.008px">LF(L)/weit.F.(B)</div>
<svg style="left:895px;top:200.9px" width="13" height="13"><circle cx="6.5" cy="6.5" r="5.9" fill="#fff" stroke="#333" stroke-width="1"/></svg>
<div class="t" style="left:911.5px;top:201.29px;font-size:11px;;letter-spacing:-0.097px">Kurslehrer/in</div>
<div class="a" style="left:884px;top:222px;width:129px;height:584px;border-top:1px solid #a0a0a0"></div>
<div class="a" style="left:0;top:0;width:1287px;height:806px;overflow:hidden">
<div class="a" style="left:885px;top:223px;width:110px;height:16px;background:#c5d5e5;border:1px dotted #202020"></div>
<div class="t" style="left:887px;top:225.34px;font-size:12px;">L</div>
<div class="t" style="left:899px;top:225.34px;font-size:12px;">D</div>
<div class="t" style="left:921px;width:20px;text-align:right;top:225.34px;font-size:12px;">1</div>
<div class="t" style="left:948px;top:225.34px;font-size:12px;">Bt</div>
<div class="t" style="left:887px;top:241.34px;font-size:12px;">L</div>
<div class="t" style="left:899px;top:241.34px;font-size:12px;">D</div>
<div class="t" style="left:921px;width:20px;text-align:right;top:241.34px;font-size:12px;">2</div>
<div class="t" style="left:948px;top:241.34px;font-size:12px;">Hr</div>
<div class="a" style="left:885px;top:255px;width:110px;height:16px;background:#ffff00"></div>
<div class="t" style="left:887px;top:257.34px;font-size:12px;">B</div>
<div class="t" style="left:899px;top:257.34px;font-size:12px;">D</div>
<div class="t" style="left:921px;width:20px;text-align:right;top:257.34px;font-size:12px;">1</div>
<div class="t" style="left:948px;top:257.34px;font-size:12px;">Hn</div>
<div class="t" style="left:887px;top:273.34px;font-size:12px;">B</div>
<div class="t" style="left:899px;top:273.34px;font-size:12px;">D</div>
<div class="t" style="left:921px;width:20px;text-align:right;top:273.34px;font-size:12px;">2</div>
<div class="t" style="left:948px;top:273.34px;font-size:12px;">Lo</div>
<div class="a" style="left:885px;top:287px;width:110px;height:16px;background:#ffff00"></div>
<div class="t" style="left:887px;top:289.34px;font-size:12px;">B</div>
<div class="t" style="left:899px;top:289.34px;font-size:12px;">D</div>
<div class="t" style="left:921px;width:20px;text-align:right;top:289.34px;font-size:12px;">3</div>
<div class="t" style="left:948px;top:289.34px;font-size:12px;">Ha</div>
<div class="t" style="left:887px;top:305.34px;font-size:12px;">L</div>
<div class="t" style="left:899px;top:305.34px;font-size:12px;">E</div>
<div class="t" style="left:921px;width:20px;text-align:right;top:305.34px;font-size:12px;">1</div>
<div class="t" style="left:948px;top:305.34px;font-size:12px;">Gz</div>
<div class="a" style="left:885px;top:319px;width:110px;height:16px;background:#ffff00"></div>
<div class="t" style="left:887px;top:321.34px;font-size:12px;">B</div>
<div class="t" style="left:899px;top:321.34px;font-size:12px;">E</div>
<div class="t" style="left:921px;width:20px;text-align:right;top:321.34px;font-size:12px;">1</div>
<div class="t" style="left:948px;top:321.34px;font-size:12px;">Wg</div>
<div class="t" style="left:887px;top:337.34px;font-size:12px;">B</div>
<div class="t" style="left:899px;top:337.34px;font-size:12px;">E</div>
<div class="t" style="left:921px;width:20px;text-align:right;top:337.34px;font-size:12px;">2</div>
<div class="t" style="left:948px;top:337.34px;font-size:12px;">Sk</div>
<div class="a" style="left:885px;top:351px;width:110px;height:16px;background:#ffff00"></div>
<div class="t" style="left:887px;top:353.34px;font-size:12px;">B</div>
<div class="t" style="left:899px;top:353.34px;font-size:12px;">E</div>
<div class="t" style="left:921px;width:20px;text-align:right;top:353.34px;font-size:12px;">3</div>
<div class="t" style="left:948px;top:353.34px;font-size:12px;">Go</div>
<div class="t" style="left:887px;top:369.34px;font-size:12px;">L</div>
<div class="t" style="left:899px;top:369.34px;font-size:12px;">F</div>
<div class="t" style="left:921px;width:20px;text-align:right;top:369.34px;font-size:12px;">1</div>
<div class="t" style="left:948px;top:369.34px;font-size:12px;">Lo</div>
<div class="a" style="left:885px;top:383px;width:110px;height:16px;background:#ffff00"></div>
<div class="t" style="left:887px;top:385.34px;font-size:12px;">B</div>
<div class="t" style="left:899px;top:385.34px;font-size:12px;">F</div>
<div class="t" style="left:921px;width:20px;text-align:right;top:385.34px;font-size:12px;">1</div>
<div class="t" style="left:948px;top:385.34px;font-size:12px;">Sd</div>
<div class="t" style="left:887px;top:401.34px;font-size:12px;">L</div>
<div class="t" style="left:899px;top:401.34px;font-size:12px;">L</div>
<div class="t" style="left:921px;width:20px;text-align:right;top:401.34px;font-size:12px;">1</div>
<div class="t" style="left:948px;top:401.34px;font-size:12px;"></div>
<div class="a" style="left:885px;top:415px;width:110px;height:16px;background:#ffff00"></div>
<div class="t" style="left:887px;top:417.34px;font-size:12px;">B</div>
<div class="t" style="left:899px;top:417.34px;font-size:12px;">I</div>
<div class="t" style="left:921px;width:20px;text-align:right;top:417.34px;font-size:12px;">1</div>
<div class="t" style="left:948px;top:417.34px;font-size:12px;">Ot</div>
<div class="t" style="left:887px;top:433.34px;font-size:12px;">L</div>
<div class="t" style="left:899px;top:433.34px;font-size:12px;">Sp</div>
<div class="t" style="left:921px;width:20px;text-align:right;top:433.34px;font-size:12px;">1</div>
<div class="t" style="left:948px;top:433.34px;font-size:12px;"></div>
<div class="a" style="left:885px;top:447px;width:110px;height:16px;background:#ffff00"></div>
<div class="t" style="left:887px;top:449.34px;font-size:12px;">L</div>
<div class="t" style="left:899px;top:449.34px;font-size:12px;">BK</div>
<div class="t" style="left:921px;width:20px;text-align:right;top:449.34px;font-size:12px;">1</div>
<div class="t" style="left:948px;top:449.34px;font-size:12px;">Hd</div>
<div class="t" style="left:887px;top:465.34px;font-size:12px;">B</div>
<div class="t" style="left:899px;top:465.34px;font-size:12px;">BK</div>
<div class="t" style="left:921px;width:20px;text-align:right;top:465.34px;font-size:12px;">1</div>
<div class="t" style="left:948px;top:465.34px;font-size:12px;">Sw</div>
<div class="a" style="left:885px;top:479px;width:110px;height:16px;background:#ffff00"></div>
<div class="t" style="left:887px;top:481.34px;font-size:12px;">B</div>
<div class="t" style="left:899px;top:481.34px;font-size:12px;">BK</div>
<div class="t" style="left:921px;width:20px;text-align:right;top:481.34px;font-size:12px;">2</div>
<div class="t" style="left:948px;top:481.34px;font-size:12px;">Hd</div>
<div class="t" style="left:887px;top:497.34px;font-size:12px;">B</div>
<div class="t" style="left:899px;top:497.34px;font-size:12px;">BK</div>
<div class="t" style="left:921px;width:20px;text-align:right;top:497.34px;font-size:12px;">3</div>
<div class="t" style="left:948px;top:497.34px;font-size:12px;">Gs</div>
<div class="a" style="left:885px;top:511px;width:110px;height:16px;background:#ffff00"></div>
<div class="t" style="left:887px;top:513.34px;font-size:12px;">L</div>
<div class="t" style="left:899px;top:513.34px;font-size:12px;">Mu</div>
<div class="t" style="left:921px;width:20px;text-align:right;top:513.34px;font-size:12px;">1</div>
<div class="t" style="left:948px;top:513.34px;font-size:12px;">Bi</div>
<div class="t" style="left:887px;top:529.34px;font-size:12px;">B</div>
<div class="t" style="left:899px;top:529.34px;font-size:12px;">Mu</div>
<div class="t" style="left:921px;width:20px;text-align:right;top:529.34px;font-size:12px;">1</div>
<div class="t" style="left:948px;top:529.34px;font-size:12px;">Sm</div>
<div class="a" style="left:885px;top:543px;width:110px;height:16px;background:#ffff00"></div>
<div class="t" style="left:887px;top:545.34px;font-size:12px;">L</div>
<div class="t" style="left:899px;top:545.34px;font-size:12px;">G</div>
<div class="t" style="left:921px;width:20px;text-align:right;top:545.34px;font-size:12px;">1</div>
<div class="t" style="left:948px;top:545.34px;font-size:12px;">Ho</div>
<div class="t" style="left:887px;top:561.34px;font-size:12px;">B</div>
<div class="t" style="left:899px;top:561.34px;font-size:12px;">G</div>
<div class="t" style="left:921px;width:20px;text-align:right;top:561.34px;font-size:12px;">1</div>
<div class="t" style="left:948px;top:561.34px;font-size:12px;">Ba</div>
<div class="a" style="left:885px;top:575px;width:110px;height:16px;background:#ffff00"></div>
<div class="t" style="left:887px;top:577.34px;font-size:12px;">B</div>
<div class="t" style="left:899px;top:577.34px;font-size:12px;">G</div>
<div class="t" style="left:921px;width:20px;text-align:right;top:577.34px;font-size:12px;">2</div>
<div class="t" style="left:948px;top:577.34px;font-size:12px;">WF</div>
<div class="t" style="left:887px;top:593.34px;font-size:12px;">B</div>
<div class="t" style="left:899px;top:593.34px;font-size:12px;">G</div>
<div class="t" style="left:921px;width:20px;text-align:right;top:593.34px;font-size:12px;">3</div>
<div class="t" style="left:948px;top:593.34px;font-size:12px;">Bt</div>
<div class="a" style="left:885px;top:607px;width:110px;height:16px;background:#ffff00"></div>
<div class="t" style="left:887px;top:609.34px;font-size:12px;">B</div>
<div class="t" style="left:899px;top:609.34px;font-size:12px;">G</div>
<div class="t" style="left:921px;width:20px;text-align:right;top:609.34px;font-size:12px;">4</div>
<div class="t" style="left:948px;top:609.34px;font-size:12px;">Ho</div>
<div class="t" style="left:887px;top:625.34px;font-size:12px;">L</div>
<div class="t" style="left:899px;top:625.34px;font-size:12px;">Geo</div>
<div class="t" style="left:921px;width:20px;text-align:right;top:625.34px;font-size:12px;">1</div>
<div class="t" style="left:948px;top:625.34px;font-size:12px;">Kb</div>
<div class="a" style="left:885px;top:639px;width:110px;height:16px;background:#ffff00"></div>
<div class="t" style="left:887px;top:641.34px;font-size:12px;">B</div>
<div class="t" style="left:899px;top:641.34px;font-size:12px;">Geo</div>
<div class="t" style="left:921px;width:20px;text-align:right;top:641.34px;font-size:12px;">1</div>
<div class="t" style="left:948px;top:641.34px;font-size:12px;"></div>
<div class="t" style="left:887px;top:657.34px;font-size:12px;">B</div>
<div class="t" style="left:899px;top:657.34px;font-size:12px;">Geo</div>
<div class="t" style="left:921px;width:20px;text-align:right;top:657.34px;font-size:12px;">2</div>
<div class="t" style="left:948px;top:657.34px;font-size:12px;"></div>
<div class="a" style="left:885px;top:671px;width:110px;height:16px;background:#ffff00"></div>
<div class="t" style="left:887px;top:673.34px;font-size:12px;">B</div>
<div class="t" style="left:899px;top:673.34px;font-size:12px;">Geo</div>
<div class="t" style="left:921px;width:20px;text-align:right;top:673.34px;font-size:12px;">3</div>
<div class="t" style="left:948px;top:673.34px;font-size:12px;"></div>
<div class="t" style="left:887px;top:689.34px;font-size:12px;">B</div>
<div class="t" style="left:899px;top:689.34px;font-size:12px;">Geo</div>
<div class="t" style="left:921px;width:20px;text-align:right;top:689.34px;font-size:12px;">4</div>
<div class="t" style="left:948px;top:689.34px;font-size:12px;"></div>
<div class="a" style="left:885px;top:703px;width:110px;height:16px;background:#ffff00"></div>
<div class="t" style="left:887px;top:705.34px;font-size:12px;">L</div>
<div class="t" style="left:899px;top:705.34px;font-size:12px;">Gk</div>
<div class="t" style="left:921px;width:20px;text-align:right;top:705.34px;font-size:12px;">1</div>
<div class="t" style="left:948px;top:705.34px;font-size:12px;"></div>
<div class="t" style="left:887px;top:721.34px;font-size:12px;">B</div>
<div class="t" style="left:899px;top:721.34px;font-size:12px;">Gk</div>
<div class="t" style="left:921px;width:20px;text-align:right;top:721.34px;font-size:12px;">1</div>
<div class="t" style="left:948px;top:721.34px;font-size:12px;">Na</div>
<div class="a" style="left:885px;top:735px;width:110px;height:16px;background:#ffff00"></div>
<div class="t" style="left:887px;top:737.34px;font-size:12px;">B</div>
<div class="t" style="left:899px;top:737.34px;font-size:12px;">Gk</div>
<div class="t" style="left:921px;width:20px;text-align:right;top:737.34px;font-size:12px;">2</div>
<div class="t" style="left:948px;top:737.34px;font-size:12px;">Ba</div>
<div class="t" style="left:887px;top:753.34px;font-size:12px;">B</div>
<div class="t" style="left:899px;top:753.34px;font-size:12px;">Gk</div>
<div class="t" style="left:921px;width:20px;text-align:right;top:753.34px;font-size:12px;">3</div>
<div class="t" style="left:948px;top:753.34px;font-size:12px;">Lp</div>
<div class="a" style="left:885px;top:767px;width:110px;height:16px;background:#ffff00"></div>
<div class="t" style="left:887px;top:769.34px;font-size:12px;">L</div>
<div class="t" style="left:899px;top:769.34px;font-size:12px;">Wi</div>
<div class="t" style="left:921px;width:20px;text-align:right;top:769.34px;font-size:12px;">1</div>
<div class="t" style="left:948px;top:769.34px;font-size:12px;">Na</div>
<div class="t" style="left:887px;top:785.34px;font-size:12px;">B</div>
<div class="t" style="left:899px;top:785.34px;font-size:12px;">Rel</div>
<div class="t" style="left:921px;width:20px;text-align:right;top:785.34px;font-size:12px;">1</div>
<div class="t" style="left:948px;top:785.34px;font-size:12px;">Le</div>
<div class="a" style="left:885px;top:799px;width:110px;height:16px;background:#ffff00"></div>
<div class="t" style="left:887px;top:801.34px;font-size:12px;">B</div>
<div class="t" style="left:899px;top:801.34px;font-size:12px;">Rel</div>
<div class="t" style="left:921px;width:20px;text-align:right;top:801.34px;font-size:12px;">2</div>
<div class="t" style="left:948px;top:801.34px;font-size:12px;">Sr</div>
</div>
<div class="a" style="left:996px;top:223px;width:15px;height:583px;background:#f0f0f0"></div>
<div class="a" style="left:996px;top:240px;width:15px;height:300px;background:#cdcdcd"></div>
<svg style="left:999px;top:229px" width="10" height="6"><path d="M1.5 5.2L5 1.5L8.5 5.2" fill="none" stroke="#404040" stroke-width="1.6"/></svg>
<svg style="left:999px;top:795px" width="10" height="6"><path d="M1.5 0.8L5 4.5L8.5 0.8" fill="none" stroke="#404040" stroke-width="1.6"/></svg>
<div class="a" style="left:1022px;top:806px;width:1px;height:10px;background:#a0a0a0"></div>
<div class="a" style="left:877px;top:89px;width:146px;height:722px;border:5px solid #ff0000;border-radius:8px"></div>
<div class="t" style="left:1041px;top:109.00px;font-size:13px;">Zahl aktiver Sätze</div>
<div class="t" style="left:1160px;top:109.00px;font-size:13px;font-weight:bold">093</div>
<div class="t" style="left:1041px;top:131.00px;font-size:13px;">Sätze in Auswahl</div>
<div class="t" style="left:1160px;top:131.00px;font-size:13px;font-weight:bold">093</div>
<div class="a" style="left:1190px;top:108px;width:87px;height:80px;border:1px solid #a0a0a0;border-top-color:#b8b8b8"></div>
<div class="t" style="left:1197.5px;top:103.69px;font-size:11px;background:#fff;padding:0 1px">Sch'Zahlen</div>
<div class="t" style="left:1200px;top:121.00px;font-size:13px;">000</div>
<div class="t" style="left:1200px;top:145.00px;font-size:13px;">007</div>
<div class="t" style="left:1200px;top:167.00px;font-size:13px;">006</div>
<div class="a" style="left:1225px;top:117px;width:50px;height:20px;background:#e6e6e6;border:1px solid #d0d0d0"></div>
<div class="t" style="left:1225.0px;width:50px;text-align:center;top:121.34px;font-size:12px;">Ext'Z</div>
<div class="a" style="left:1225px;top:141px;width:50px;height:20px;background:#e6e6e6;border:1px solid #d0d0d0"></div>
<div class="t" style="left:1225.0px;width:50px;text-align:center;top:145.34px;font-size:12px;">Koop'Z.</div>
<div class="a" style="left:1225px;top:164px;width:50px;height:20px;background:#e6e6e6;border:1px solid #d0d0d0"></div>
<div class="t" style="left:1225.0px;width:50px;text-align:center;top:168.34px;font-size:12px;">Löschm</div>
<div class="a" style="left:1038px;top:156px;width:146px;height:31px;border:1px solid #c8c8c8;border-top-color:#e0e0e0;border-left-color:#e0e0e0"></div>
<div class="a" style="left:1041px;top:159px;width:25px;height:25px;background:#e6e6e6;border:1px solid #d0d0d0"></div>
<div class="a" style="left:1070px;top:159px;width:25px;height:25px;background:#e6e6e6;border:1px solid #d0d0d0"></div>
<div class="a" style="left:1099px;top:159px;width:25px;height:25px;background:#e6e6e6;border:1px solid #d0d0d0"></div>
<div class="a" style="left:1127px;top:159px;width:25px;height:25px;background:#e6e6e6;border:1px solid #d0d0d0"></div>
<div class="a" style="left:1156px;top:159px;width:25px;height:25px;background:#e6e6e6;border:1px solid #d0d0d0"></div>
<div class="a" style="left:1041px;top:159px;width:25px;height:25px;background:#f0f0f0;border:1px solid #6a6a6a"></div>
<div class="t" style="left:1041.0px;width:25px;text-align:center;top:166.00px;font-size:13px;font-weight:bold;color:#a0a0a0">A</div>
<svg style="left:1074px;top:163px" width="17" height="16"><path d="M1 9.5L4.5 7L6 10L14.5 1L16 3.5L5 14.5Z" fill="#107030" stroke="#202080" stroke-width="0.8"/></svg>
<svg style="left:1103px;top:163px" width="17" height="17" shape-rendering="crispEdges"><path d="M1 1.5Q6 4 11 1.5" fill="none" stroke="#404040" stroke-width="1.2"/><path d="M2 2.5H10L7.5 6V13H4.5V6Z" fill="#808080" stroke="#303030" stroke-width="0.8"/><path d="M11.5 4L15 9H13V13H10V9H8Z" fill="#ff0000" stroke="#000" stroke-width="0.6"/><rect x="1" y="15" width="15" height="1.5" fill="#000"/></svg>
<svg style="left:1132px;top:162px" width="16" height="18" shape-rendering="crispEdges"><rect x="3" y="0" width="5" height="1" fill="#ff8020"/><rect x="2" y="1" width="8" height="1" fill="#ff8020"/><rect x="1" y="2" width="9" height="1" fill="#ff8020"/><rect x="12" y="2" width="3" height="1" fill="#a03010"/><rect x="1" y="3" width="7" height="1" fill="#ff8020"/><rect x="8" y="3" width="1" height="1" fill="#ffff80"/><rect x="9" y="3" width="1" height="1" fill="#000"/><rect x="11" y="3" width="4" height="1" fill="#a03010"/><rect x="15" y="3" width="1" height="1" fill="#000"/><rect x="1" y="4" width="5" height="1" fill="#ff8020"/><rect x="6" y="4" width="3" height="1" fill="#ffff80"/><rect x="9" y="4" width="1" height="1" fill="#000"/><rect x="10" y="4" width="5" height="1" fill="#a03010"/><rect x="15" y="4" width="1" height="1" fill="#000"/><rect x="1" y="5" width="2" height="1" fill="#000"/><rect x="3" y="5" width="2" height="1" fill="#ff8020"/><rect x="5" y="5" width="4" height="1" fill="#ffff80"/><rect x="9" y="5" width="1" height="1" fill="#000"/><rect x="10" y="5" width="3" height="1" fill="#a03010"/><rect x="13" y="5" width="1" height="1" fill="#ffff80"/><rect x="14" y="5" width="1" height="1" fill="#000"/><rect x="2" y="6" width="2" height="1" fill="#000"/><rect x="4" y="6" width="4" height="1" fill="#ffff80"/><rect x="8" y="6" width="1" height="1" fill="#000"/><rect x="9" y="6" width="2" height="1" fill="#a03010"/><rect x="11" y="6" width="3" height="1" fill="#ffff80"/><rect x="14" y="6" width="1" height="1" fill="#000"/><rect x="1" y="7" width="4" height="1" fill="#000"/><rect x="5" y="7" width="2" height="1" fill="#ffff80"/><rect x="7" y="7" width="2" height="1" fill="#000"/><rect x="9" y="7" width="1" height="1" fill="#a03010"/><rect x="10" y="7" width="5" height="1" fill="#ffff80"/><rect x="15" y="7" width="1" height="1" fill="#000"/><rect x="1" y="8" width="8" height="1" fill="#000"/><rect x="9" y="8" width="5" height="1" fill="#ffff80"/><rect x="14" y="8" width="1" height="1" fill="#000"/><rect x="1" y="9" width="9" height="1" fill="#000"/><rect x="10" y="9" width="4" height="1" fill="#ffff80"/><rect x="14" y="9" width="1" height="1" fill="#000"/><rect x="0" y="10" width="14" height="1" fill="#000"/><rect x="0" y="11" width="6" height="1" fill="#000"/><rect x="6" y="11" width="2" height="1" fill="#ffff80"/><rect x="8" y="11" width="2" height="1" fill="#000"/><rect x="0" y="12" width="4" height="1" fill="#000"/><rect x="4" y="12" width="5" height="1" fill="#ffff80"/><rect x="9" y="12" width="1" height="1" fill="#000"/><rect x="1" y="13" width="2" height="1" fill="#000"/><rect x="3" y="13" width="7" height="1" fill="#ffff80"/><rect x="10" y="13" width="1" height="1" fill="#000"/><rect x="2" y="14" width="1" height="1" fill="#000"/><rect x="3" y="14" width="6" height="1" fill="#ffff80"/><rect x="9" y="14" width="1" height="1" fill="#000"/><rect x="2" y="15" width="2" height="1" fill="#000"/><rect x="4" y="15" width="5" height="1" fill="#ffff80"/><rect x="9" y="15" width="1" height="1" fill="#000"/><rect x="3" y="16" width="1" height="1" fill="#000"/><rect x="4" y="16" width="4" height="1" fill="#ffff80"/><rect x="8" y="16" width="1" height="1" fill="#000"/><rect x="3" y="17" width="6" height="1" fill="#000"/></svg>
<svg style="left:1157px;top:160px" width="24" height="23" shape-rendering="crispEdges"><path d="M1.5 0.5H8L10.5 3V12.5H1.5Z" fill="#fff" stroke="#000"/><path d="M3 5H8M3 7H8M3 9H6" stroke="#000"/><path d="M9 7H15V12M13 10.5L15 12.5L17 10.5" fill="none" stroke="#e00000" stroke-width="1.1"/><path d="M6 13V22H19L23 14H10L8 13Z" fill="#f0f060" stroke="#000" stroke-width="0.8"/><path d="M6 22L10 16H23L19 22Z" fill="#9a8a30" stroke="#000" stroke-width="0.8"/></svg>
<div class="a" style="left:1038px;top:212px;width:240px;height:23px;background:#e6e6e6;border:1px solid #c4c4c4"></div>
<div class="t" style="left:1042.5px;top:216.42px;font-size:12.5px;">alle aktiven Sätze (alle ohne Löschm.)</div>
<svg style="left:1264px;top:221px" width="9" height="5"><path d="M0.5 0.5L4.5 4.5L8.5 0.5" fill="none" stroke="#555"/></svg>
<div class="a" style="left:1038px;top:240px;width:240px;height:28px;background:#e6e6e6;border:1px solid #c0c0c0"></div>
<div class="a" style="left:1041px;top:243px;width:234px;height:22px;border:1px solid #d0d0d0"></div>
<svg style="left:1076px;top:246px" width="14" height="16"><path d="M0.5 1.5H10L13.5 5V15.5H0.5Z" fill="#fff" stroke="#000"/><rect x="1" y="2" width="9" height="1.5" fill="#e00000"/><text x="6.5" y="9" font-size="5" font-family="Liberation Sans" text-anchor="middle">JAN</text><text x="6.5" y="14.5" font-size="5.5" font-weight="bold" font-family="Liberation Sans" text-anchor="middle">1</text></svg>
<div class="t" style="left:1102.5px;top:249.42px;font-size:12.5px;;letter-spacing:-0.362px">Vergleichsdatum eingeben</div>
<div class="t" style="left:1038.5px;top:272.69px;font-size:11px;;letter-spacing:-0.262px">aktuelle Reihenfolge:</div>
<div class="a" style="left:1038px;top:287px;width:127px;height:23px;background:#e6e6e6;border:1px solid #c4c4c4"></div>
<div class="t" style="left:1042.5px;top:292.92px;font-size:12.5px;">alphabetisch</div>
<svg style="left:1151px;top:296px" width="9" height="5"><path d="M0.5 0.5L4.5 4.5L8.5 0.5" fill="none" stroke="#555"/></svg>
<div class="a" style="left:1169px;top:293px;width:13px;height:13px;border:1px solid #333;background:#fff"></div>
<div class="t" style="left:1185.5px;top:294.69px;font-size:11px;;letter-spacing:-0.278px">Reihenf. umkehren</div>
<div class="a" style="left:1038px;top:311px;width:33px;height:24px;background:#e6e6e6;border:1px solid #7a7a7a"></div>
<div class="t" style="left:1044.5px;top:316.00px;font-size:13px;">087</div>
<div class="a" style="left:1075px;top:311px;width:160px;height:24px;background:#e6e6e6;border:1px solid #7a7a7a"></div>
<div class="t" style="left:1078px;top:316.00px;font-size:13px;">Alders, Adrian</div>
<div class="a" style="left:1237px;top:311px;width:41px;height:24px;background:#e6e6e6;border:1px solid #7a7a7a"></div>
<div class="t" style="left:1247.5px;top:316.00px;font-size:13px;">dss</div>
<div class="a" style="left:0;top:0;width:1287px;height:801px;overflow:hidden">
<div class="a" style="left:1039px;top:346px;width:216px;height:18px;background:#ffff00"></div>
<div class="t" style="left:1041px;top:348.15px;font-size:14px;letter-spacing:0.2px">Abel, Anton</div>
<div class="t" style="left:1041px;top:366.15px;font-size:14px;letter-spacing:0.2px">Adelmann, Adrian</div>
<div class="a" style="left:1039px;top:382px;width:216px;height:18px;background:#ffff00"></div>
<div class="t" style="left:1041px;top:384.15px;font-size:14px;letter-spacing:0.2px">Barer, Bea</div>
<div class="t" style="left:1041px;top:402.15px;font-size:14px;letter-spacing:0.2px">Becker, Bettina</div>
<div class="a" style="left:1039px;top:418px;width:216px;height:18px;background:#ffff00"></div>
<div class="t" style="left:1041px;top:420.15px;font-size:14px;letter-spacing:0.2px">Berger, Bernd</div>
<div class="t" style="left:1041px;top:438.15px;font-size:14px;letter-spacing:0.2px">Bocholdt, Bettina</div>
<div class="a" style="left:1039px;top:454px;width:216px;height:18px;background:#ffff00"></div>
<div class="t" style="left:1041px;top:456.15px;font-size:14px;letter-spacing:0.2px">Born, Bert</div>
<div class="t" style="left:1041px;top:474.15px;font-size:14px;letter-spacing:0.2px">Börner, Brigitte</div>
<div class="a" style="left:1039px;top:490px;width:216px;height:18px;background:#ffff00"></div>
<div class="t" style="left:1041px;top:492.15px;font-size:14px;letter-spacing:0.2px">Brauch, Bianca</div>
<div class="t" style="left:1041px;top:510.15px;font-size:14px;letter-spacing:0.2px">Breder, Burkhard</div>
<div class="a" style="left:1039px;top:526px;width:216px;height:18px;background:#ffff00"></div>
<div class="t" style="left:1041px;top:528.15px;font-size:14px;letter-spacing:0.2px">Brumm, Betty</div>
<div class="t" style="left:1041px;top:546.15px;font-size:14px;letter-spacing:0.2px">Bucher, Bob</div>
<div class="a" style="left:1039px;top:562px;width:216px;height:18px;background:#ffff00"></div>
<div class="t" style="left:1041px;top:564.15px;font-size:14px;letter-spacing:0.2px">Bursch, Beatrix</div>
<div class="t" style="left:1041px;top:582.15px;font-size:14px;letter-spacing:0.2px">Dall, Doris</div>
<div class="a" style="left:1039px;top:598px;width:216px;height:18px;background:#ffff00"></div>
<div class="t" style="left:1041px;top:600.15px;font-size:14px;letter-spacing:0.2px">Diener, Doro</div>
<div class="t" style="left:1041px;top:618.15px;font-size:14px;letter-spacing:0.2px">Dorfle, Dagmar</div>
<div class="a" style="left:1039px;top:634px;width:216px;height:18px;background:#ffff00"></div>
<div class="t" style="left:1041px;top:636.15px;font-size:14px;letter-spacing:0.2px">Dufrénoy, Adélaïde</div>
<div class="t" style="left:1041px;top:654.15px;font-size:14px;letter-spacing:0.2px">Ebert, Erna</div>
<div class="a" style="left:1039px;top:670px;width:216px;height:18px;background:#ffff00"></div>
<div class="t" style="left:1041px;top:672.15px;font-size:14px;letter-spacing:0.2px">Eiermann, Elsbeth</div>
<div class="t" style="left:1041px;top:690.15px;font-size:14px;letter-spacing:0.2px">Fichter, Friderike</div>
<div class="a" style="left:1039px;top:706px;width:216px;height:18px;background:#ffff00"></div>
<div class="t" style="left:1041px;top:708.15px;font-size:14px;letter-spacing:0.2px">Firn, Franz</div>
<div class="t" style="left:1041px;top:726.15px;font-size:14px;letter-spacing:0.2px">Fleik, Ferdinand</div>
<div class="a" style="left:1039px;top:742px;width:216px;height:18px;background:#ffff00"></div>
<div class="t" style="left:1041px;top:744.15px;font-size:14px;letter-spacing:0.2px">Gollwitz, Georg</div>
<div class="t" style="left:1041px;top:762.15px;font-size:14px;letter-spacing:0.2px">Graner, Gustav</div>
<div class="a" style="left:1039px;top:778px;width:216px;height:18px;background:#ffff00"></div>
<div class="t" style="left:1041px;top:780.15px;font-size:14px;letter-spacing:0.2px">Greim, Gerd</div>
<div class="t" style="left:1041px;top:798.15px;font-size:14px;letter-spacing:0.2px">Grinach, Günter</div>
</div>
<div class="a" style="left:1256px;top:346px;width:16px;height:455px;background:#f0f0f0"></div>
<div class="a" style="left:1256px;top:363px;width:16px;height:113px;background:#cdcdcd"></div>
<svg style="left:1259px;top:351px" width="10" height="6"><path d="M1.5 5.2L5 1.5L8.5 5.2" fill="none" stroke="#404040" stroke-width="1.6"/></svg>
<svg style="left:1259px;top:791px" width="10" height="6"><path d="M1.5 0.8L5 4.5L8.5 0.8" fill="none" stroke="#404040" stroke-width="1.6"/></svg>
<div class="a" style="left:1px;top:816px;width:1285px;height:20px;border:1px solid #007385;background:#fff"></div>
<div class="t" style="left:18px;top:820.43px;font-size:11.3px;;letter-spacing:-0.261px">ARLTCOM | 44417700129838</div>
<div class="t" style="left:229px;top:820.43px;font-size:11.3px;;letter-spacing:-0.085px">ti (SDWHRPA)</div>
<div class="t" style="left:386.4px;top:820.43px;font-size:11.3px;;letter-spacing:0.239px">winprosa</div>
<div class="t" style="left:593.6px;top:820.43px;font-size:11.3px;;letter-spacing:0.011px">2021-08-09</div>
<div class="t" style="left:714.4px;top:820.43px;font-size:11.3px;;letter-spacing:0.202px">987 - 01234567 - Demo-Gymnasium Stuttgart-Ost [ RP Stuttgart]</div>
<svg style="left:1272px;top:822px" width="11" height="11"><g fill="#00606e"><rect x="8" y="0" width="2" height="2"/><rect x="4" y="4" width="2" height="2"/><rect x="8" y="4" width="2" height="2"/><rect x="0" y="8" width="2" height="2"/><rect x="4" y="8" width="2" height="2"/><rect x="8" y="8" width="2" height="2"/></g></svg>
</body></html>
